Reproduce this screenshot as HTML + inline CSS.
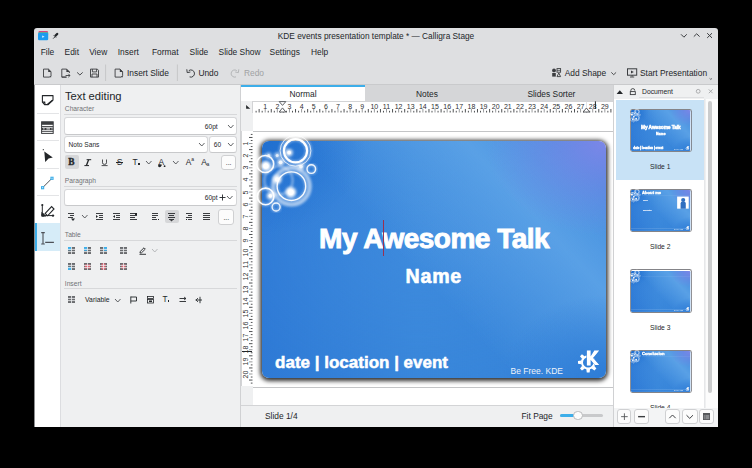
<!DOCTYPE html>
<html><head><meta charset="utf-8"><style>
html,body{margin:0;padding:0;}
body{width:752px;height:468px;background:#000;position:relative;overflow:hidden;font-family:"Liberation Sans", sans-serif;}
</style></head><body>
<div style="position:absolute;left:34px;top:28px;width:684px;height:399px;background:#dedfe1;border-radius:3px 3px 0 0;"></div>
<div style="position:absolute;left:76px;width:600px;text-align:center;top:31.97px;font-size:8.3px;line-height:8.3px;color:#232629;font-weight:normal;white-space:nowrap;font-family:'Liberation Sans', sans-serif;">KDE events presentation template * — Calligra Stage</div>
<div style="position:absolute;left:40.7px;top:48.29px;font-size:8.4px;line-height:8.4px;color:#232629;font-weight:normal;white-space:nowrap;font-family:'Liberation Sans', sans-serif;">File</div>
<div style="position:absolute;left:64.6px;top:48.29px;font-size:8.4px;line-height:8.4px;color:#232629;font-weight:normal;white-space:nowrap;font-family:'Liberation Sans', sans-serif;">Edit</div>
<div style="position:absolute;left:89.2px;top:48.29px;font-size:8.4px;line-height:8.4px;color:#232629;font-weight:normal;white-space:nowrap;font-family:'Liberation Sans', sans-serif;">View</div>
<div style="position:absolute;left:117.8px;top:48.29px;font-size:8.4px;line-height:8.4px;color:#232629;font-weight:normal;white-space:nowrap;font-family:'Liberation Sans', sans-serif;">Insert</div>
<div style="position:absolute;left:152px;top:48.29px;font-size:8.4px;line-height:8.4px;color:#232629;font-weight:normal;white-space:nowrap;font-family:'Liberation Sans', sans-serif;">Format</div>
<div style="position:absolute;left:189.6px;top:48.29px;font-size:8.4px;line-height:8.4px;color:#232629;font-weight:normal;white-space:nowrap;font-family:'Liberation Sans', sans-serif;">Slide</div>
<div style="position:absolute;left:218.6px;top:48.29px;font-size:8.4px;line-height:8.4px;color:#232629;font-weight:normal;white-space:nowrap;font-family:'Liberation Sans', sans-serif;">Slide Show</div>
<div style="position:absolute;left:269.6px;top:48.29px;font-size:8.4px;line-height:8.4px;color:#232629;font-weight:normal;white-space:nowrap;font-family:'Liberation Sans', sans-serif;">Settings</div>
<div style="position:absolute;left:311px;top:48.29px;font-size:8.4px;line-height:8.4px;color:#232629;font-weight:normal;white-space:nowrap;font-family:'Liberation Sans', sans-serif;">Help</div>
<div style="position:absolute;left:127px;top:69.49px;font-size:8.4px;line-height:8.4px;color:#232629;font-weight:normal;white-space:nowrap;font-family:'Liberation Sans', sans-serif;">Insert Slide</div>
<div style="position:absolute;left:198.4px;top:69.49px;font-size:8.4px;line-height:8.4px;color:#232629;font-weight:normal;white-space:nowrap;font-family:'Liberation Sans', sans-serif;">Undo</div>
<div style="position:absolute;left:244px;top:69.49px;font-size:8.4px;line-height:8.4px;color:#a0a2a4;font-weight:normal;white-space:nowrap;font-family:'Liberation Sans', sans-serif;">Redo</div>
<div style="position:absolute;left:564.7px;top:69.49px;font-size:8.4px;line-height:8.4px;color:#232629;font-weight:normal;white-space:nowrap;font-family:'Liberation Sans', sans-serif;">Add Shape</div>
<div style="position:absolute;left:640px;top:69.49px;font-size:8.4px;line-height:8.4px;color:#232629;font-weight:normal;white-space:nowrap;font-family:'Liberation Sans', sans-serif;">Start Presentation</div>
<svg style="position:absolute;left:34px;top:28px;" width="684" height="57" viewBox="0 0 684 57"><g transform="translate(-34,-28)"><rect x="38.5" y="31" width="9.5" height="2.5" rx="1" fill="#e0457b"/><rect x="38.3" y="32.2" width="10" height="2" rx="0.8" fill="#3cc7a0"/><rect x="38" y="33" width="10.2" height="7.3" rx="1.2" fill="#1d9bf0"/><path d="M42.2 35.6 L44.6 36.7 L42.2 37.8 Z" fill="#e6f3fd"/><path d="M53.2 38.6 L55.2 36.6" stroke="#232629" stroke-width="0.9"/><path d="M54.3 35.2 L56.6 32.9 Q57.6 32.5 58.2 33.3 Q58.6 34 58 34.7 L55.8 37 Z" fill="#232629"/><path d="M53.8 35.3 L56 37.5" stroke="#232629" stroke-width="1"/><path d="M681 34.3 L683.9 37.2 L686.8 34.3" fill="none" stroke="#3b3d40" stroke-width="1"/><path d="M693.8 36.6 L696.7 33.8 L699.6 36.6" fill="none" stroke="#3b3d40" stroke-width="1"/><path d="M707.2 33.2 L712 37.9 M712 33.2 L707.2 37.9" fill="none" stroke="#3b3d40" stroke-width="1"/><path d="M43.5 69.1 H48.4 L51 71.7 V75.6 L49.5 77.1 H43.5 Z" fill="none" stroke="#3b3d40" stroke-width="0.9"/><path d="M48.2 68.7 L51.4 71.9 L48.2 71.9 Z" fill="#3b3d40"/><path d="M49.4 77.3 L51.2 75.5 L51.2 77.3 Z" fill="#3b3d40"/><path d="M61.8 69.1 H66.6 L69.4 71.9 V73 M66.5 77.1 H61.8 Z" fill="none" stroke="#3b3d40" stroke-width="0.9"/><path d="M61.8 69.1 V77.1" stroke="#3b3d40" stroke-width="0.9"/><path d="M66.4 68.7 L69.8 72.1 L66.4 72.1 Z" fill="#3b3d40"/><path d="M65.6 75.5 H70 M68.3 73.8 L70 75.5 L68.3 77.2" fill="none" stroke="#3b3d40" stroke-width="0.9"/><path d="M77.1 72.4 L79.9 75 L82.7 72.4" fill="none" stroke="#3b3d40" stroke-width="0.9"/><path d="M90.5 69.1 H97.3 L98.5 70.3 V77.1 H90.5 Z" fill="none" stroke="#3b3d40" stroke-width="0.9"/><path d="M92.4 69.1 V71.9 H96.6 V69.1" fill="none" stroke="#3b3d40" stroke-width="0.9"/><path d="M92 77.1 V74 H97 V77.1" fill="none" stroke="#3b3d40" stroke-width="0.9"/><path d="M105.6 64.5 V81" stroke="#c6c7c9" stroke-width="1"/><path d="M115.1 69.1 H120 L122.6 71.7 V75.6 L121.1 77.1 H115.1 Z" fill="none" stroke="#3b3d40" stroke-width="0.9"/><path d="M119.8 68.7 L123 71.9 L119.8 71.9 Z" fill="#3b3d40"/><path d="M121 77.3 L122.8 75.5 L122.8 77.3 Z" fill="#3b3d40"/><path d="M177.4 64.5 V81" stroke="#c6c7c9" stroke-width="1"/><path d="M188.8 70.6 A3.6 3.6 0 1 1 189.6 76.9" fill="none" stroke="#3b3d40" stroke-width="1"/><path d="M186.8 69.3 L187.2 72.6 L190.4 72" fill="none" stroke="#3b3d40" stroke-width="1"/><path d="M236.8 70.6 A3.6 3.6 0 1 0 236 76.9" fill="none" stroke="#b4b6b8" stroke-width="1"/><path d="M238.8 69.3 L238.4 72.6 L235.2 72" fill="none" stroke="#b4b6b8" stroke-width="1"/><circle cx="554" cy="70.4" r="1.9" fill="#3b3d40"/><rect x="557" y="68.6" width="3.6" height="3.6" fill="none" stroke="#3b3d40" stroke-width="0.9"/><path d="M557 70.4 H560.6" stroke="#3b3d40" stroke-width="0.7"/><rect x="552.2" y="73" width="3.6" height="3.6" fill="#3b3d40"/><path d="M557 76.6 L558.8 73 L560.6 76.6 Z" fill="none" stroke="#3b3d40" stroke-width="0.9"/><path d="M611.3 72.4 L613.7 74.7 L616.1 72.4" fill="none" stroke="#3b3d40" stroke-width="0.9"/><rect x="627.5" y="68.8" width="9.2" height="6.4" fill="none" stroke="#3b3d40" stroke-width="1"/><path d="M631 70.6 L633.8 72 L631 73.4 Z" fill="#3b3d40"/><path d="M632.1 75.2 V76.6 M630 77 H634.2" stroke="#3b3d40" stroke-width="0.9"/><path d="M709.6 78.4 L710.8 79.4 L712 78.4" fill="none" stroke="#3b3d40" stroke-width="0.7"/></g></svg>
<div style="position:absolute;left:34px;top:84px;width:684px;height:1px;background:#c9cacc;"></div>
<div style="position:absolute;left:34px;top:85px;width:1px;height:342px;background:#8c8d8f;"></div>
<div style="position:absolute;left:35px;top:85px;width:25px;height:342px;background:#ffffff;"></div>
<div style="position:absolute;left:60px;top:85px;width:1px;height:342px;background:#dcdde0;"></div>
<div style="position:absolute;left:61px;top:85px;width:179px;height:342px;background:#eff0f1;"></div>
<div style="position:absolute;left:240px;top:85px;width:1px;height:342px;background:#d0d1d3;"></div>
<div style="position:absolute;left:613px;top:85px;width:1px;height:342px;background:#d0d1d3;"></div>
<div style="position:absolute;left:614px;top:85px;width:104px;height:342px;background:#eff0f1;"></div>
<div style="position:absolute;left:37px;top:112.5px;width:22px;height:1px;background:#e3e4e6;"></div>
<div style="position:absolute;left:37px;top:140px;width:22px;height:1px;background:#e3e4e6;"></div>
<div style="position:absolute;left:37px;top:167.6px;width:22px;height:1px;background:#e3e4e6;"></div>
<div style="position:absolute;left:37px;top:195px;width:22px;height:1px;background:#e3e4e6;"></div>
<div style="position:absolute;left:35px;top:222.6px;width:25px;height:28.4px;background:#d6ecf8;"></div>
<div style="position:absolute;left:35px;top:222.6px;width:2px;height:28.4px;background:#3daee9;"></div>
<svg style="position:absolute;left:34px;top:85px;" width="27" height="166" viewBox="0 0 27 166"><g transform="translate(-34,-85)"><path d="M42.4 95.6 H53 V100 L48.2 104.6 H44.6 L42.4 102.2 Z" fill="none" stroke="#232629" stroke-width="1.1" stroke-linejoin="round"/><path d="M42.2 101.6 L45.2 101.6 L45.6 104.8 Z" fill="#232629"/><path d="M47.5 104.2 L52.5 100.2" stroke="#232629" stroke-width="1.3"/><rect x="41.6" y="121.8" width="11.6" height="11.6" fill="none" stroke="#3b3d40" stroke-width="1"/><rect x="41.6" y="121.8" width="11.6" height="3" fill="#3b3d40"/><path d="M41.6 126.6 H53.2 M41.6 131.3 H53.2" stroke="#3b3d40" stroke-width="1"/><path d="M41.6 128.9 H53.2" stroke="#3b3d40" stroke-width="2.2"/><path d="M43.2 128.9 H44.6 M46.4 128.9 H50 M51.5 128.9 H52.5" stroke="#fcfcfc" stroke-width="1"/><path d="M44.3 151.6 L52.8 157.6 L48.6 158.4 L45.2 162 Z" fill="#232629"/><circle cx="43.3" cy="149.7" r="0.6" fill="#232629"/><path d="M42.6 187.7 L52 178.3" stroke="#3b3d40" stroke-width="0.9"/><rect x="41" y="186.1" width="3.2" height="3.2" fill="#3daee9"/><rect x="50.4" y="176.7" width="3.2" height="3.2" fill="#3daee9"/><rect x="42.1" y="187.2" width="1" height="1" fill="#e8f5fc"/><rect x="51.5" y="177.8" width="1" height="1" fill="#e8f5fc"/><path d="M42.3 205 V215.6 H53" fill="none" stroke="#232629" stroke-width="1"/><circle cx="42.3" cy="205" r="1.1" fill="#232629"/><circle cx="53" cy="215.6" r="1.2" fill="#232629"/><path d="M41.4 211.8 L46.4 216.6 L41.4 216.6 Z" fill="#232629"/><circle cx="43" cy="215" r="1.7" fill="#232629"/><path d="M45.2 213.4 L51.6 206.6 L54 209 L47.6 215.8 Z" fill="none" stroke="#232629" stroke-width="1.1"/><path d="M41.2 232.6 H44.8 M43 232.6 V244 M41.2 244 H44.8 M45.2 242.4 H53.9" stroke="#4d5057" stroke-width="1.1" fill="none"/></g></svg>
<div style="position:absolute;left:65.0px;top:90.72px;font-size:11.2px;line-height:11.2px;color:#232629;font-weight:normal;white-space:nowrap;font-family:'Liberation Sans', sans-serif;">Text editing</div>
<div style="position:absolute;left:64.8px;top:105.83px;font-size:6.7px;line-height:6.7px;color:#6f7276;font-weight:normal;white-space:nowrap;font-family:'Liberation Sans', sans-serif;">Character</div>
<div style="position:absolute;left:64px;top:114px;width:173px;height:1px;background:#d7d8da;"></div>
<div style="position:absolute;left:64.8px;top:177.83px;font-size:6.7px;line-height:6.7px;color:#6f7276;font-weight:normal;white-space:nowrap;font-family:'Liberation Sans', sans-serif;">Paragraph</div>
<div style="position:absolute;left:64px;top:186px;width:173px;height:1px;background:#d7d8da;"></div>
<div style="position:absolute;left:64.8px;top:231.93px;font-size:6.7px;line-height:6.7px;color:#6f7276;font-weight:normal;white-space:nowrap;font-family:'Liberation Sans', sans-serif;">Table</div>
<div style="position:absolute;left:64px;top:240px;width:173px;height:1px;background:#d7d8da;"></div>
<div style="position:absolute;left:64.8px;top:280.63px;font-size:6.7px;line-height:6.7px;color:#6f7276;font-weight:normal;white-space:nowrap;font-family:'Liberation Sans', sans-serif;">Insert</div>
<div style="position:absolute;left:64px;top:287.8px;width:173px;height:1px;background:#d7d8da;"></div>
<div style="position:absolute;left:63.9px;top:117.4px;width:173.2px;height:17.4px;background:#ffffff;border:1px solid #d6d7d9;border-bottom-color:#c8c9cb;border-radius:3px;box-sizing:border-box;"></div>
<div style="position:absolute;right:534.3px;text-align:right;top:124.01px;font-size:6.6px;line-height:6.6px;color:#232629;font-weight:normal;white-space:nowrap;font-family:'Liberation Sans', sans-serif;">60pt</div>
<svg style="position:absolute;left:227px;top:124px;" width="7.5" height="5" viewBox="0 0 7.5 5"><path d="M1 1 L3.75 4 L6.5 1" fill="none" stroke="#4d4f52" stroke-width="0.9"/></svg>
<div style="position:absolute;left:63.9px;top:136.4px;width:144.2px;height:16.2px;background:#ffffff;border:1px solid #d6d7d9;border-bottom-color:#c8c9cb;border-radius:3px;box-sizing:border-box;"></div>
<div style="position:absolute;left:68.6px;top:142.41px;font-size:6.6px;line-height:6.6px;color:#232629;font-weight:normal;white-space:nowrap;font-family:'Liberation Sans', sans-serif;">Noto Sans</div>
<svg style="position:absolute;left:198.2px;top:142.2px;" width="7.5" height="5" viewBox="0 0 7.5 5"><path d="M1 1 L3.75 4 L6.5 1" fill="none" stroke="#4d4f52" stroke-width="0.9"/></svg>
<div style="position:absolute;left:209.4px;top:136.4px;width:27.7px;height:16.2px;background:#ffffff;border:1px solid #d6d7d9;border-bottom-color:#c8c9cb;border-radius:3px;box-sizing:border-box;"></div>
<div style="position:absolute;left:213.8px;top:142.41px;font-size:6.6px;line-height:6.6px;color:#232629;font-weight:normal;white-space:nowrap;font-family:'Liberation Sans', sans-serif;">60</div>
<svg style="position:absolute;left:226.8px;top:142.2px;" width="7.5" height="5" viewBox="0 0 7.5 5"><path d="M1 1 L3.75 4 L6.5 1" fill="none" stroke="#4d4f52" stroke-width="0.9"/></svg>
<div style="position:absolute;left:65.3px;top:155.3px;width:13.3px;height:13.7px;background:#d6d7d9;border-radius:2px;"></div>
<div style="position:absolute;left:68.3px;top:157.54px;font-size:9.4px;line-height:9.4px;color:#232629;font-weight:bold;white-space:nowrap;font-family:'Liberation Serif', serif;-webkit-text-stroke:0.35px #232629;">B</div>
<svg style="position:absolute;left:84px;top:158.6px;" width="8" height="8" viewBox="0 0 8 8"><path d="M4.6 0.7 L2.4 6.6" stroke="#232629" stroke-width="1.3"/><path d="M2.6 0.7 H7.2 M0.4 6.6 H5" stroke="#232629" stroke-width="1"/></svg>
<svg style="position:absolute;left:100.5px;top:158.6px;" width="8" height="8" viewBox="0 0 8 8"><path d="M1.5 0.5 V3.8 Q1.5 5.4 3.5 5.4 Q5.5 5.4 5.5 3.8 V0.5" fill="none" stroke="#3b3d40" stroke-width="0.9"/><path d="M0.6 6.6 H6.6" stroke="#3b3d40" stroke-width="0.9"/></svg>
<div style="position:absolute;left:116.8px;top:158.32px;font-size:8.6px;line-height:8.6px;color:#232629;font-weight:normal;white-space:nowrap;font-family:'Liberation Sans', sans-serif;">S</div>
<div style="position:absolute;left:115.8px;top:161.5px;width:7.6px;height:0.8px;background:#232629;"></div>
<div style="position:absolute;left:132.4px;top:158.29px;font-size:8.4px;line-height:8.4px;color:#232629;font-weight:normal;white-space:nowrap;font-family:'Liberation Sans', sans-serif;">T</div>
<div style="position:absolute;left:137.6px;top:163.3px;width:2px;height:2px;background:#232629;"></div>
<svg style="position:absolute;left:145px;top:159.8px;" width="7.5" height="5" viewBox="0 0 7.5 5"><path d="M1 1 L3.75 4 L6.5 1" fill="none" stroke="#4d4f52" stroke-width="0.9"/></svg>
<div style="position:absolute;left:158.6px;top:158.29px;font-size:8.4px;line-height:8.4px;color:#232629;font-weight:normal;white-space:nowrap;font-family:'Liberation Sans', sans-serif;">A</div>
<svg style="position:absolute;left:157px;top:161px;" width="10" height="7" viewBox="0 0 10 7"><path d="M1.2 3.6 Q3.5 2.6 5 3.8 L3.8 5.8 Q2.4 6.6 1.2 5.6 Z" fill="#232629"/><circle cx="7.6" cy="5.2" r="0.9" fill="#232629"/></svg>
<svg style="position:absolute;left:171.8px;top:159.8px;" width="7.5" height="5" viewBox="0 0 7.5 5"><path d="M1 1 L3.75 4 L6.5 1" fill="none" stroke="#4d4f52" stroke-width="0.9"/></svg>
<div style="position:absolute;left:185.7px;top:158.29px;font-size:8.4px;line-height:8.4px;color:#232629;font-weight:normal;white-space:nowrap;font-family:'Liberation Sans', sans-serif;">A</div>
<div style="position:absolute;left:191.3px;top:156.77px;font-size:5px;line-height:5px;color:#232629;font-weight:normal;white-space:nowrap;font-family:'Liberation Sans', sans-serif;">a</div>
<div style="position:absolute;left:201.2px;top:158.29px;font-size:8.4px;line-height:8.4px;color:#232629;font-weight:normal;white-space:nowrap;font-family:'Liberation Sans', sans-serif;">A</div>
<div style="position:absolute;left:206.6px;top:162.37px;font-size:5px;line-height:5px;color:#232629;font-weight:normal;white-space:nowrap;font-family:'Liberation Sans', sans-serif;">a</div>
<div style="position:absolute;left:220.9px;top:155px;width:15.4px;height:15.4px;background:#fcfcfc;border:1px solid #cfd0d2;border-radius:3px;box-sizing:border-box;"></div>
<div style="position:absolute;left:-71.4px;width:600px;text-align:center;top:159.37px;font-size:7px;line-height:7px;color:#232629;font-weight:normal;white-space:nowrap;font-family:'Liberation Sans', sans-serif;">...</div>
<div style="position:absolute;left:63.9px;top:189.2px;width:173.2px;height:16.6px;background:#ffffff;border:1px solid #d6d7d9;border-bottom-color:#c8c9cb;border-radius:3px;box-sizing:border-box;"></div>
<div style="position:absolute;right:534.4px;text-align:right;top:195.21px;font-size:6.6px;line-height:6.6px;color:#232629;font-weight:normal;white-space:nowrap;font-family:'Liberation Sans', sans-serif;">60pt</div>
<svg style="position:absolute;left:218.5px;top:193.8px;" width="7" height="7" viewBox="0 0 7 7"><path d="M3.5 0.5 V6.5 M0.5 3.5 H6.5" stroke="#232629" stroke-width="0.9"/></svg>
<svg style="position:absolute;left:226.4px;top:194.9px;" width="7.5" height="5" viewBox="0 0 7.5 5"><path d="M1 1 L3.75 4 L6.5 1" fill="none" stroke="#4d4f52" stroke-width="0.9"/></svg>
<svg style="position:absolute;left:68px;top:213px;" width="9" height="9" viewBox="0 0 9 9"><rect x="0" y="0" width="6" height="1" fill="#3b3d40"/><rect x="2" y="2" width="4" height="1" fill="#3b3d40"/><rect x="0" y="4" width="5" height="1" fill="#3b3d40"/><path d="M3 5.5 L7 5.5 L5 8 Z" fill="#232629"/><rect x="0" y="4" width="2" height="1" fill="#3b3d40"/></svg>
<svg style="position:absolute;left:81px;top:214.2px;" width="7.5" height="5" viewBox="0 0 7.5 5"><path d="M1 1 L3.75 4 L6.5 1" fill="none" stroke="#4d4f52" stroke-width="0.9"/></svg>
<svg style="position:absolute;left:96px;top:213px;" width="9" height="9" viewBox="0 0 9 9"><rect x="0" y="0" width="7" height="1" fill="#3b3d40"/><rect x="3" y="2" width="4" height="1" fill="#3b3d40"/><rect x="3" y="4" width="4" height="1" fill="#3b3d40"/><rect x="0" y="6" width="7" height="1" fill="#3b3d40"/><path d="M0 2 L2 3.5 L0 5 Z" fill="#232629"/></svg>
<svg style="position:absolute;left:113px;top:213px;" width="9" height="9" viewBox="0 0 9 9"><rect x="0" y="0" width="7" height="1" fill="#3b3d40"/><rect x="3" y="2" width="4" height="1" fill="#3b3d40"/><rect x="3" y="4" width="4" height="1" fill="#3b3d40"/><rect x="0" y="6" width="7" height="1" fill="#3b3d40"/><path d="M2 2 L0 3.5 L2 5 Z" fill="#232629"/></svg>
<svg style="position:absolute;left:130px;top:213px;" width="9" height="9" viewBox="0 0 9 9"><rect x="0" y="0" width="5" height="1" fill="#3b3d40"/><rect x="0" y="2" width="7" height="1" fill="#3b3d40"/><rect x="0" y="4" width="5" height="1" fill="#3b3d40"/><rect x="0" y="6" width="7" height="1" fill="#3b3d40"/><rect x="5" y="0" width="2" height="2" fill="#232629"/></svg>
<div style="position:absolute;left:165.3px;top:210.1px;width:13.4px;height:13.1px;background:#d6d7d9;border-radius:2px;"></div>
<svg style="position:absolute;left:152px;top:213px;" width="9" height="9" viewBox="0 0 9 9"><rect x="0" y="0" width="6" height="1" fill="#3b3d40"/><rect x="0" y="2" width="6" height="1" fill="#3b3d40"/><rect x="0" y="4" width="4" height="1" fill="#3b3d40"/><rect x="0" y="6" width="5" height="1" fill="#3b3d40"/><rect x="6" y="6" width="1" height="1" fill="#232629"/></svg>
<svg style="position:absolute;left:168px;top:213px;" width="9" height="9" viewBox="0 0 9 9"><rect x="0" y="0" width="7" height="1" fill="#3b3d40"/><rect x="1" y="2" width="5" height="1" fill="#3b3d40"/><rect x="0" y="4" width="7" height="1" fill="#3b3d40"/><rect x="1" y="6" width="5" height="1" fill="#3b3d40"/><path d="M2 7 L5 7 L3.5 8.5 Z" fill="#3b3d40"/></svg>
<svg style="position:absolute;left:186px;top:213px;" width="9" height="9" viewBox="0 0 9 9"><rect x="0" y="0" width="6" height="1" fill="#3b3d40"/><rect x="2" y="2" width="4" height="1" fill="#3b3d40"/><rect x="0" y="4" width="6" height="1" fill="#3b3d40"/><rect x="2" y="6" width="4" height="1" fill="#3b3d40"/><rect x="0" y="6" width="1" height="1" fill="#232629"/></svg>
<svg style="position:absolute;left:203px;top:213px;" width="9" height="9" viewBox="0 0 9 9"><rect x="0" y="0" width="7" height="1" fill="#3b3d40"/><rect x="0" y="2" width="7" height="1" fill="#3b3d40"/><rect x="0" y="4" width="7" height="1" fill="#3b3d40"/><rect x="0" y="6" width="7" height="1" fill="#3b3d40"/></svg>
<div style="position:absolute;left:218.4px;top:208.8px;width:15.8px;height:16.7px;background:#fcfcfc;border:1px solid #cfd0d2;border-radius:3px;box-sizing:border-box;"></div>
<div style="position:absolute;left:-73.69999999999999px;width:600px;text-align:center;top:213.67px;font-size:7px;line-height:7px;color:#232629;font-weight:normal;white-space:nowrap;font-family:'Liberation Sans', sans-serif;">...</div>
<svg style="position:absolute;left:68.4px;top:247.2px;" width="7" height="7" viewBox="0 0 7 7"><rect x="0" y="0" width="7" height="7" fill="#6a6c6f"/><rect x="0" y="0" width="3.5" height="3.2" fill="#3daee9"/><path d="M0 2.4 H7 M0 4.6 H7 M3.5 0 V7" stroke="#eef0f2" stroke-width="0.8"/></svg>
<svg style="position:absolute;left:84.4px;top:247.2px;" width="7" height="7" viewBox="0 0 7 7"><rect x="0" y="0" width="7" height="7" fill="#6a6c6f"/><rect x="0" y="0" width="3.5" height="3.8" fill="#3daee9"/><path d="M0 2.4 H7 M0 4.6 H7 M3.5 0 V7" stroke="#eef0f2" stroke-width="0.8"/></svg>
<svg style="position:absolute;left:100.2px;top:247.2px;" width="7" height="7" viewBox="0 0 7 7"><rect x="0" y="0" width="7" height="7" fill="#6a6c6f"/><rect x="3.5" y="0" width="3.5" height="3.8" fill="#3daee9"/><path d="M0 2.4 H7 M0 4.6 H7 M3.5 0 V7" stroke="#eef0f2" stroke-width="0.8"/></svg>
<svg style="position:absolute;left:119.8px;top:247.2px;" width="7" height="7" viewBox="0 0 7 7"><rect x="0" y="0" width="7" height="7" fill="#6a6c6f"/><path d="M0 2.4 H7 M0 4.6 H7 M3.5 0 V7" stroke="#eef0f2" stroke-width="0.8"/></svg>
<svg style="position:absolute;left:138.5px;top:247px;" width="8" height="8" viewBox="0 0 8 8"><path d="M1 6 L1.2 4.5 L5 0.8 L6.3 2.1 L2.5 5.8 Z" fill="none" stroke="#232629" stroke-width="0.9"/><path d="M0.5 7.3 H7" stroke="#232629" stroke-width="0.9"/></svg>
<svg style="position:absolute;left:151.1px;top:248.4px;" width="7.5" height="5" viewBox="0 0 7.5 5"><path d="M1 1 L3.75 4 L6.5 1" fill="none" stroke="#b0b2b4" stroke-width="0.9"/></svg>
<svg style="position:absolute;left:68.4px;top:263.2px;" width="7" height="7" viewBox="0 0 7 7"><rect x="0" y="0" width="7" height="7" fill="#6a6c6f"/><rect x="0" y="3.8" width="3.5" height="3.2" fill="#3daee9"/><path d="M0 2.4 H7 M0 4.6 H7 M3.5 0 V7" stroke="#eef0f2" stroke-width="0.8"/></svg>
<svg style="position:absolute;left:84.4px;top:263.2px;" width="7" height="7" viewBox="0 0 7 7"><rect x="0" y="0" width="7" height="7" fill="#6a6c6f"/><rect x="0.8" y="1.5" width="5.4" height="4" fill="#e26573"/><path d="M0 2.4 H7 M0 4.6 H7 M3.5 0 V7" stroke="#eef0f2" stroke-width="0.8"/></svg>
<svg style="position:absolute;left:100.2px;top:263.2px;" width="7" height="7" viewBox="0 0 7 7"><rect x="0" y="0" width="7" height="7" fill="#6a6c6f"/><rect x="1.5" y="0.5" width="4" height="6" fill="#e26573"/><path d="M0 2.4 H7 M0 4.6 H7 M3.5 0 V7" stroke="#eef0f2" stroke-width="0.8"/></svg>
<svg style="position:absolute;left:119.8px;top:263.2px;" width="7" height="7" viewBox="0 0 7 7"><rect x="0" y="0" width="7" height="7" fill="#6a6c6f"/><rect x="1.5" y="1.5" width="4" height="4" fill="#e26573"/><path d="M0 2.4 H7 M0 4.6 H7 M3.5 0 V7" stroke="#eef0f2" stroke-width="0.8"/></svg>
<svg style="position:absolute;left:68.4px;top:296px;" width="7" height="7" viewBox="0 0 7 7"><rect x="0" y="0" width="7" height="7" fill="#6a6c6f"/><path d="M0 2.4 H7 M0 4.6 H7 M3.5 0 V7" stroke="#eef0f2" stroke-width="0.8"/></svg>
<div style="position:absolute;left:85.1px;top:296.64px;font-size:6.8px;line-height:6.8px;color:#232629;font-weight:normal;white-space:nowrap;font-family:'Liberation Sans', sans-serif;">Variable</div>
<svg style="position:absolute;left:114px;top:297.6px;" width="7.5" height="5" viewBox="0 0 7.5 5"><path d="M1 1 L3.75 4 L6.5 1" fill="none" stroke="#4d4f52" stroke-width="0.9"/></svg>
<svg style="position:absolute;left:129.9px;top:295.5px;" width="8" height="8" viewBox="0 0 8 8"><path d="M0.8 0.5 V7.5 M0.8 1 H6.5 V5 H0.8" fill="none" stroke="#232629" stroke-width="0.9"/></svg>
<svg style="position:absolute;left:146.6px;top:295.5px;" width="8" height="8" viewBox="0 0 8 8"><rect x="0.5" y="0.5" width="6" height="2" fill="none" stroke="#232629" stroke-width="0.8"/><rect x="0.5" y="3.5" width="6" height="3.5" fill="none" stroke="#232629" stroke-width="0.8"/><rect x="2" y="4.5" width="3" height="1.5" fill="#232629"/></svg>
<div style="position:absolute;left:162.4px;top:295.66px;font-size:8.2px;line-height:8.2px;color:#232629;font-weight:normal;white-space:nowrap;font-family:'Liberation Sans', sans-serif;">T</div>
<div style="position:absolute;left:167.7px;top:300.3px;width:1.8px;height:1.8px;background:#232629;"></div>
<svg style="position:absolute;left:178.5px;top:295.5px;" width="8" height="8" viewBox="0 0 8 8"><path d="M0.5 2.5 H7 M0.5 5.5 H7" stroke="#232629" stroke-width="0.9"/><path d="M5 1 L7 2.5 L5 4" fill="none" stroke="#232629" stroke-width="0.8"/></svg>
<svg style="position:absolute;left:194.5px;top:295.5px;" width="8" height="8" viewBox="0 0 8 8"><path d="M0.5 4 H7 M5 0.8 V7.2" stroke="#232629" stroke-width="0.9"/><path d="M3 2 L1 4 L3 6" fill="none" stroke="#232629" stroke-width="0.8"/></svg>
<div style="position:absolute;left:241px;top:85px;width:372px;height:16px;background:#d5d6d8;"></div>
<div style="position:absolute;left:241px;top:85px;width:124px;height:16px;background:#ffffff;"></div>
<div style="position:absolute;left:241px;top:85px;width:124px;height:2px;background:#3daee9;"></div>
<div style="position:absolute;left:3px;width:600px;text-align:center;top:89.59px;font-size:8.4px;line-height:8.4px;color:#232629;font-weight:normal;white-space:nowrap;font-family:'Liberation Sans', sans-serif;">Normal</div>
<div style="position:absolute;left:127px;width:600px;text-align:center;top:89.59px;font-size:8.4px;line-height:8.4px;color:#232629;font-weight:normal;white-space:nowrap;font-family:'Liberation Sans', sans-serif;">Notes</div>
<div style="position:absolute;left:251.39999999999998px;width:600px;text-align:center;top:89.59px;font-size:8.4px;line-height:8.4px;color:#232629;font-weight:normal;white-space:nowrap;font-family:'Liberation Sans', sans-serif;">Slides Sorter</div>
<div style="position:absolute;left:241px;top:101px;width:372px;height:12px;background:#eff0f1;"></div>
<div style="position:absolute;left:252px;top:101px;width:361px;height:12px;background:#ffffff;border-top:1px solid #d3d4d6;border-left:1px solid #d3d4d6;box-sizing:border-box;"></div>
<svg style="position:absolute;left:245px;top:104px;" width="7" height="6" viewBox="0 0 7 6"><path d="M1.1 0.9 L5.3 4.8 L1.1 4.8 Z" fill="#232629"/></svg>
<svg style="position:absolute;left:253px;top:101px;" width="360" height="12" viewBox="0 0 360 12"><rect x="2.60" y="9.8" width="1" height="1.7" fill="#505254"/><rect x="5.63" y="8" width="1" height="3.5" fill="#505254"/><rect x="8.67" y="9.8" width="1" height="1.7" fill="#505254"/><rect x="11.70" y="8" width="1" height="3.5" fill="#9a9b9d"/><rect x="14.73" y="9.8" width="1" height="1.7" fill="#505254"/><rect x="17.76" y="8" width="1" height="3.5" fill="#505254"/><rect x="20.80" y="9.8" width="1" height="1.7" fill="#505254"/><rect x="23.83" y="8" width="1" height="3.5" fill="#9a9b9d"/><rect x="26.86" y="9.8" width="1" height="1.7" fill="#505254"/><rect x="29.89" y="8" width="1" height="3.5" fill="#505254"/><rect x="32.93" y="9.8" width="1" height="1.7" fill="#505254"/><rect x="35.96" y="8" width="1" height="3.5" fill="#9a9b9d"/><rect x="38.99" y="9.8" width="1" height="1.7" fill="#505254"/><rect x="42.02" y="8" width="1" height="3.5" fill="#505254"/><rect x="45.06" y="9.8" width="1" height="1.7" fill="#505254"/><rect x="48.09" y="8" width="1" height="3.5" fill="#9a9b9d"/><rect x="51.12" y="9.8" width="1" height="1.7" fill="#505254"/><rect x="54.15" y="8" width="1" height="3.5" fill="#505254"/><rect x="57.19" y="9.8" width="1" height="1.7" fill="#505254"/><rect x="60.22" y="8" width="1" height="3.5" fill="#9a9b9d"/><rect x="63.25" y="9.8" width="1" height="1.7" fill="#505254"/><rect x="66.28" y="8" width="1" height="3.5" fill="#505254"/><rect x="69.32" y="9.8" width="1" height="1.7" fill="#505254"/><rect x="72.35" y="8" width="1" height="3.5" fill="#9a9b9d"/><rect x="75.38" y="9.8" width="1" height="1.7" fill="#505254"/><rect x="78.41" y="8" width="1" height="3.5" fill="#505254"/><rect x="81.45" y="9.8" width="1" height="1.7" fill="#505254"/><rect x="84.48" y="8" width="1" height="3.5" fill="#9a9b9d"/><rect x="87.51" y="9.8" width="1" height="1.7" fill="#505254"/><rect x="90.55" y="8" width="1" height="3.5" fill="#505254"/><rect x="93.58" y="9.8" width="1" height="1.7" fill="#505254"/><rect x="96.61" y="8" width="1" height="3.5" fill="#9a9b9d"/><rect x="99.64" y="9.8" width="1" height="1.7" fill="#505254"/><rect x="102.68" y="8" width="1" height="3.5" fill="#505254"/><rect x="105.71" y="9.8" width="1" height="1.7" fill="#505254"/><rect x="108.74" y="8" width="1" height="3.5" fill="#9a9b9d"/><rect x="111.77" y="9.8" width="1" height="1.7" fill="#505254"/><rect x="114.81" y="8" width="1" height="3.5" fill="#505254"/><rect x="117.84" y="9.8" width="1" height="1.7" fill="#505254"/><rect x="120.87" y="8" width="1" height="3.5" fill="#9a9b9d"/><rect x="123.90" y="9.8" width="1" height="1.7" fill="#505254"/><rect x="126.94" y="8" width="1" height="3.5" fill="#505254"/><rect x="129.97" y="9.8" width="1" height="1.7" fill="#505254"/><rect x="133.00" y="8" width="1" height="3.5" fill="#9a9b9d"/><rect x="136.03" y="9.8" width="1" height="1.7" fill="#505254"/><rect x="139.06" y="8" width="1" height="3.5" fill="#505254"/><rect x="142.10" y="9.8" width="1" height="1.7" fill="#505254"/><rect x="145.13" y="8" width="1" height="3.5" fill="#9a9b9d"/><rect x="148.16" y="9.8" width="1" height="1.7" fill="#505254"/><rect x="151.19" y="8" width="1" height="3.5" fill="#505254"/><rect x="154.23" y="9.8" width="1" height="1.7" fill="#505254"/><rect x="157.26" y="8" width="1" height="3.5" fill="#9a9b9d"/><rect x="160.29" y="9.8" width="1" height="1.7" fill="#505254"/><rect x="163.33" y="8" width="1" height="3.5" fill="#505254"/><rect x="166.36" y="9.8" width="1" height="1.7" fill="#505254"/><rect x="169.39" y="8" width="1" height="3.5" fill="#9a9b9d"/><rect x="172.42" y="9.8" width="1" height="1.7" fill="#505254"/><rect x="175.46" y="8" width="1" height="3.5" fill="#505254"/><rect x="178.49" y="9.8" width="1" height="1.7" fill="#505254"/><rect x="181.52" y="8" width="1" height="3.5" fill="#9a9b9d"/><rect x="184.55" y="9.8" width="1" height="1.7" fill="#505254"/><rect x="187.59" y="8" width="1" height="3.5" fill="#505254"/><rect x="190.62" y="9.8" width="1" height="1.7" fill="#505254"/><rect x="193.65" y="8" width="1" height="3.5" fill="#9a9b9d"/><rect x="196.68" y="9.8" width="1" height="1.7" fill="#505254"/><rect x="199.72" y="8" width="1" height="3.5" fill="#505254"/><rect x="202.75" y="9.8" width="1" height="1.7" fill="#505254"/><rect x="205.78" y="8" width="1" height="3.5" fill="#9a9b9d"/><rect x="208.81" y="9.8" width="1" height="1.7" fill="#505254"/><rect x="211.85" y="8" width="1" height="3.5" fill="#505254"/><rect x="214.88" y="9.8" width="1" height="1.7" fill="#505254"/><rect x="217.91" y="8" width="1" height="3.5" fill="#9a9b9d"/><rect x="220.94" y="9.8" width="1" height="1.7" fill="#505254"/><rect x="223.98" y="8" width="1" height="3.5" fill="#505254"/><rect x="227.01" y="9.8" width="1" height="1.7" fill="#505254"/><rect x="230.04" y="8" width="1" height="3.5" fill="#9a9b9d"/><rect x="233.07" y="9.8" width="1" height="1.7" fill="#505254"/><rect x="236.11" y="8" width="1" height="3.5" fill="#505254"/><rect x="239.14" y="9.8" width="1" height="1.7" fill="#505254"/><rect x="242.17" y="8" width="1" height="3.5" fill="#9a9b9d"/><rect x="245.20" y="9.8" width="1" height="1.7" fill="#505254"/><rect x="248.24" y="8" width="1" height="3.5" fill="#505254"/><rect x="251.27" y="9.8" width="1" height="1.7" fill="#505254"/><rect x="254.30" y="8" width="1" height="3.5" fill="#9a9b9d"/><rect x="257.33" y="9.8" width="1" height="1.7" fill="#505254"/><rect x="260.37" y="8" width="1" height="3.5" fill="#505254"/><rect x="263.40" y="9.8" width="1" height="1.7" fill="#505254"/><rect x="266.43" y="8" width="1" height="3.5" fill="#9a9b9d"/><rect x="269.46" y="9.8" width="1" height="1.7" fill="#505254"/><rect x="272.50" y="8" width="1" height="3.5" fill="#505254"/><rect x="275.53" y="9.8" width="1" height="1.7" fill="#505254"/><rect x="278.56" y="8" width="1" height="3.5" fill="#9a9b9d"/><rect x="281.59" y="9.8" width="1" height="1.7" fill="#505254"/><rect x="284.62" y="8" width="1" height="3.5" fill="#505254"/><rect x="287.66" y="9.8" width="1" height="1.7" fill="#505254"/><rect x="290.69" y="8" width="1" height="3.5" fill="#9a9b9d"/><rect x="293.72" y="9.8" width="1" height="1.7" fill="#505254"/><rect x="296.75" y="8" width="1" height="3.5" fill="#505254"/><rect x="299.79" y="9.8" width="1" height="1.7" fill="#505254"/><rect x="302.82" y="8" width="1" height="3.5" fill="#9a9b9d"/><rect x="305.85" y="9.8" width="1" height="1.7" fill="#505254"/><rect x="308.88" y="8" width="1" height="3.5" fill="#505254"/><rect x="311.92" y="9.8" width="1" height="1.7" fill="#505254"/><rect x="314.95" y="8" width="1" height="3.5" fill="#9a9b9d"/><rect x="317.98" y="9.8" width="1" height="1.7" fill="#505254"/><rect x="321.01" y="8" width="1" height="3.5" fill="#505254"/><rect x="324.05" y="9.8" width="1" height="1.7" fill="#505254"/><rect x="327.08" y="8" width="1" height="3.5" fill="#9a9b9d"/><rect x="330.11" y="9.8" width="1" height="1.7" fill="#505254"/><rect x="333.14" y="8" width="1" height="3.5" fill="#505254"/><rect x="336.18" y="9.8" width="1" height="1.7" fill="#505254"/><rect x="339.21" y="8" width="1" height="3.5" fill="#9a9b9d"/><rect x="342.24" y="9.8" width="1" height="1.7" fill="#505254"/><rect x="345.28" y="8" width="1" height="3.5" fill="#505254"/><rect x="348.31" y="9.8" width="1" height="1.7" fill="#505254"/><rect x="351.34" y="8" width="1" height="3.5" fill="#9a9b9d"/><rect x="354.37" y="9.8" width="1" height="1.7" fill="#505254"/><rect x="357.40" y="8" width="1" height="3.5" fill="#505254"/></svg>
<div style="position:absolute;left:-34.80000000000001px;width:600px;text-align:center;top:102.97px;font-size:7px;line-height:7px;color:#2e3033;font-weight:normal;white-space:nowrap;font-family:'Liberation Sans', sans-serif;">1</div>
<div style="position:absolute;left:-22.670000000000016px;width:600px;text-align:center;top:102.97px;font-size:7px;line-height:7px;color:#2e3033;font-weight:normal;white-space:nowrap;font-family:'Liberation Sans', sans-serif;">2</div>
<div style="position:absolute;left:-10.54000000000002px;width:600px;text-align:center;top:102.97px;font-size:7px;line-height:7px;color:#2e3033;font-weight:normal;white-space:nowrap;font-family:'Liberation Sans', sans-serif;">3</div>
<div style="position:absolute;left:1.589999999999975px;width:600px;text-align:center;top:102.97px;font-size:7px;line-height:7px;color:#2e3033;font-weight:normal;white-space:nowrap;font-family:'Liberation Sans', sans-serif;">4</div>
<div style="position:absolute;left:13.720000000000027px;width:600px;text-align:center;top:102.97px;font-size:7px;line-height:7px;color:#2e3033;font-weight:normal;white-space:nowrap;font-family:'Liberation Sans', sans-serif;">5</div>
<div style="position:absolute;left:25.850000000000023px;width:600px;text-align:center;top:102.97px;font-size:7px;line-height:7px;color:#2e3033;font-weight:normal;white-space:nowrap;font-family:'Liberation Sans', sans-serif;">6</div>
<div style="position:absolute;left:37.98000000000002px;width:600px;text-align:center;top:102.97px;font-size:7px;line-height:7px;color:#2e3033;font-weight:normal;white-space:nowrap;font-family:'Liberation Sans', sans-serif;">7</div>
<div style="position:absolute;left:50.110000000000014px;width:600px;text-align:center;top:102.97px;font-size:7px;line-height:7px;color:#2e3033;font-weight:normal;white-space:nowrap;font-family:'Liberation Sans', sans-serif;">8</div>
<div style="position:absolute;left:62.24000000000001px;width:600px;text-align:center;top:102.97px;font-size:7px;line-height:7px;color:#2e3033;font-weight:normal;white-space:nowrap;font-family:'Liberation Sans', sans-serif;">9</div>
<div style="position:absolute;left:74.37px;width:600px;text-align:center;top:102.97px;font-size:7px;line-height:7px;color:#2e3033;font-weight:normal;white-space:nowrap;font-family:'Liberation Sans', sans-serif;">10</div>
<div style="position:absolute;left:86.5px;width:600px;text-align:center;top:102.97px;font-size:7px;line-height:7px;color:#2e3033;font-weight:normal;white-space:nowrap;font-family:'Liberation Sans', sans-serif;">11</div>
<div style="position:absolute;left:98.63px;width:600px;text-align:center;top:102.97px;font-size:7px;line-height:7px;color:#2e3033;font-weight:normal;white-space:nowrap;font-family:'Liberation Sans', sans-serif;">12</div>
<div style="position:absolute;left:110.75999999999999px;width:600px;text-align:center;top:102.97px;font-size:7px;line-height:7px;color:#2e3033;font-weight:normal;white-space:nowrap;font-family:'Liberation Sans', sans-serif;">13</div>
<div style="position:absolute;left:122.88999999999999px;width:600px;text-align:center;top:102.97px;font-size:7px;line-height:7px;color:#2e3033;font-weight:normal;white-space:nowrap;font-family:'Liberation Sans', sans-serif;">14</div>
<div style="position:absolute;left:135.01999999999998px;width:600px;text-align:center;top:102.97px;font-size:7px;line-height:7px;color:#2e3033;font-weight:normal;white-space:nowrap;font-family:'Liberation Sans', sans-serif;">15</div>
<div style="position:absolute;left:147.14999999999998px;width:600px;text-align:center;top:102.97px;font-size:7px;line-height:7px;color:#2e3033;font-weight:normal;white-space:nowrap;font-family:'Liberation Sans', sans-serif;">16</div>
<div style="position:absolute;left:159.27999999999997px;width:600px;text-align:center;top:102.97px;font-size:7px;line-height:7px;color:#2e3033;font-weight:normal;white-space:nowrap;font-family:'Liberation Sans', sans-serif;">17</div>
<div style="position:absolute;left:171.40999999999997px;width:600px;text-align:center;top:102.97px;font-size:7px;line-height:7px;color:#2e3033;font-weight:normal;white-space:nowrap;font-family:'Liberation Sans', sans-serif;">18</div>
<div style="position:absolute;left:183.54000000000002px;width:600px;text-align:center;top:102.97px;font-size:7px;line-height:7px;color:#2e3033;font-weight:normal;white-space:nowrap;font-family:'Liberation Sans', sans-serif;">19</div>
<div style="position:absolute;left:195.67000000000002px;width:600px;text-align:center;top:102.97px;font-size:7px;line-height:7px;color:#2e3033;font-weight:normal;white-space:nowrap;font-family:'Liberation Sans', sans-serif;">20</div>
<div style="position:absolute;left:207.8px;width:600px;text-align:center;top:102.97px;font-size:7px;line-height:7px;color:#2e3033;font-weight:normal;white-space:nowrap;font-family:'Liberation Sans', sans-serif;">21</div>
<div style="position:absolute;left:219.93000000000006px;width:600px;text-align:center;top:102.97px;font-size:7px;line-height:7px;color:#2e3033;font-weight:normal;white-space:nowrap;font-family:'Liberation Sans', sans-serif;">22</div>
<div style="position:absolute;left:232.05999999999995px;width:600px;text-align:center;top:102.97px;font-size:7px;line-height:7px;color:#2e3033;font-weight:normal;white-space:nowrap;font-family:'Liberation Sans', sans-serif;">23</div>
<div style="position:absolute;left:244.19000000000005px;width:600px;text-align:center;top:102.97px;font-size:7px;line-height:7px;color:#2e3033;font-weight:normal;white-space:nowrap;font-family:'Liberation Sans', sans-serif;">24</div>
<div style="position:absolute;left:256.31999999999994px;width:600px;text-align:center;top:102.97px;font-size:7px;line-height:7px;color:#2e3033;font-weight:normal;white-space:nowrap;font-family:'Liberation Sans', sans-serif;">25</div>
<div style="position:absolute;left:268.45000000000005px;width:600px;text-align:center;top:102.97px;font-size:7px;line-height:7px;color:#2e3033;font-weight:normal;white-space:nowrap;font-family:'Liberation Sans', sans-serif;">26</div>
<div style="position:absolute;left:280.58000000000004px;width:600px;text-align:center;top:102.97px;font-size:7px;line-height:7px;color:#2e3033;font-weight:normal;white-space:nowrap;font-family:'Liberation Sans', sans-serif;">27</div>
<div style="position:absolute;left:292.71000000000004px;width:600px;text-align:center;top:102.97px;font-size:7px;line-height:7px;color:#2e3033;font-weight:normal;white-space:nowrap;font-family:'Liberation Sans', sans-serif;">28</div>
<div style="position:absolute;left:304.84000000000003px;width:600px;text-align:center;top:102.97px;font-size:7px;line-height:7px;color:#2e3033;font-weight:normal;white-space:nowrap;font-family:'Liberation Sans', sans-serif;">29</div>
<svg style="position:absolute;left:241px;top:99px;" width="372" height="16" viewBox="0 0 372 16"><g transform="translate(-241,-99)"><path d="M279.2 101.6 H285.8 L282.5 105.4 Z" fill="#ffffff" stroke="#4d4f52" stroke-width="0.9"/><path d="M279.2 112 H285.8 L282.5 107.9 Z" fill="#ffffff" stroke="#4d4f52" stroke-width="0.9"/><path d="M586.5 101.5 V112.5" stroke="#dcdde0" stroke-width="0.8"/><path d="M583.2 112 H589.6 L586.4 108 Z" fill="#ffffff" stroke="#4d4f52" stroke-width="0.9"/><path d="M595.4 101.3 V109" stroke="#232629" stroke-width="1"/></g></svg>
<div style="position:absolute;left:241px;top:113px;width:372px;height:292px;background:#ffffff;"></div>
<div style="position:absolute;left:241px;top:113px;width:12px;height:18px;background:#eff0f1;"></div>
<div style="position:absolute;left:241px;top:131px;width:12px;height:274px;background:#eff0f1;"></div>
<div style="position:absolute;left:241px;top:131px;width:12px;height:255px;background:#ffffff;border-left:1px solid #d3d4d6;box-sizing:border-box;"></div>
<div style="position:absolute;left:229.7px;top:140.03px;width:30px;height:7px;line-height:7px;text-align:center;font-size:7px;color:#2e3033;transform:rotate(-90deg);">1</div>
<div style="position:absolute;left:229.7px;top:152.16px;width:30px;height:7px;line-height:7px;text-align:center;font-size:7px;color:#2e3033;transform:rotate(-90deg);">2</div>
<div style="position:absolute;left:229.7px;top:164.29px;width:30px;height:7px;line-height:7px;text-align:center;font-size:7px;color:#2e3033;transform:rotate(-90deg);">3</div>
<div style="position:absolute;left:229.7px;top:176.42px;width:30px;height:7px;line-height:7px;text-align:center;font-size:7px;color:#2e3033;transform:rotate(-90deg);">4</div>
<div style="position:absolute;left:229.7px;top:188.55px;width:30px;height:7px;line-height:7px;text-align:center;font-size:7px;color:#2e3033;transform:rotate(-90deg);">5</div>
<div style="position:absolute;left:229.7px;top:200.68px;width:30px;height:7px;line-height:7px;text-align:center;font-size:7px;color:#2e3033;transform:rotate(-90deg);">6</div>
<div style="position:absolute;left:229.7px;top:212.81px;width:30px;height:7px;line-height:7px;text-align:center;font-size:7px;color:#2e3033;transform:rotate(-90deg);">7</div>
<div style="position:absolute;left:229.7px;top:224.94px;width:30px;height:7px;line-height:7px;text-align:center;font-size:7px;color:#2e3033;transform:rotate(-90deg);">8</div>
<div style="position:absolute;left:229.7px;top:237.07px;width:30px;height:7px;line-height:7px;text-align:center;font-size:7px;color:#2e3033;transform:rotate(-90deg);">9</div>
<div style="position:absolute;left:229.7px;top:249.20px;width:30px;height:7px;line-height:7px;text-align:center;font-size:7px;color:#2e3033;transform:rotate(-90deg);">10</div>
<div style="position:absolute;left:229.7px;top:261.33px;width:30px;height:7px;line-height:7px;text-align:center;font-size:7px;color:#2e3033;transform:rotate(-90deg);">11</div>
<div style="position:absolute;left:229.7px;top:273.46px;width:30px;height:7px;line-height:7px;text-align:center;font-size:7px;color:#2e3033;transform:rotate(-90deg);">12</div>
<div style="position:absolute;left:229.7px;top:285.59px;width:30px;height:7px;line-height:7px;text-align:center;font-size:7px;color:#2e3033;transform:rotate(-90deg);">13</div>
<div style="position:absolute;left:229.7px;top:297.72px;width:30px;height:7px;line-height:7px;text-align:center;font-size:7px;color:#2e3033;transform:rotate(-90deg);">14</div>
<div style="position:absolute;left:229.7px;top:309.85px;width:30px;height:7px;line-height:7px;text-align:center;font-size:7px;color:#2e3033;transform:rotate(-90deg);">15</div>
<div style="position:absolute;left:229.7px;top:321.98px;width:30px;height:7px;line-height:7px;text-align:center;font-size:7px;color:#2e3033;transform:rotate(-90deg);">16</div>
<div style="position:absolute;left:229.7px;top:334.11px;width:30px;height:7px;line-height:7px;text-align:center;font-size:7px;color:#2e3033;transform:rotate(-90deg);">17</div>
<div style="position:absolute;left:229.7px;top:346.24px;width:30px;height:7px;line-height:7px;text-align:center;font-size:7px;color:#2e3033;transform:rotate(-90deg);">18</div>
<div style="position:absolute;left:229.7px;top:358.37px;width:30px;height:7px;line-height:7px;text-align:center;font-size:7px;color:#2e3033;transform:rotate(-90deg);">19</div>
<div style="position:absolute;left:229.7px;top:370.50px;width:30px;height:7px;line-height:7px;text-align:center;font-size:7px;color:#2e3033;transform:rotate(-90deg);">20</div>
<svg style="position:absolute;left:241px;top:131px;" width="12" height="255" viewBox="0 0 12 255"><rect x="9.8" y="2.93" width="1.7" height="1" fill="#505254"/><rect x="8" y="5.97" width="3.5" height="1" fill="#505254"/><rect x="9.8" y="9.00" width="1.7" height="1" fill="#505254"/><rect x="8" y="12.03" width="3.5" height="1" fill="#9a9b9d"/><rect x="9.8" y="15.06" width="1.7" height="1" fill="#505254"/><rect x="8" y="18.09" width="3.5" height="1" fill="#505254"/><rect x="9.8" y="21.13" width="1.7" height="1" fill="#505254"/><rect x="8" y="24.16" width="3.5" height="1" fill="#9a9b9d"/><rect x="9.8" y="27.19" width="1.7" height="1" fill="#505254"/><rect x="8" y="30.23" width="3.5" height="1" fill="#505254"/><rect x="9.8" y="33.26" width="1.7" height="1" fill="#505254"/><rect x="8" y="36.29" width="3.5" height="1" fill="#9a9b9d"/><rect x="9.8" y="39.32" width="1.7" height="1" fill="#505254"/><rect x="8" y="42.36" width="3.5" height="1" fill="#505254"/><rect x="9.8" y="45.39" width="1.7" height="1" fill="#505254"/><rect x="8" y="48.42" width="3.5" height="1" fill="#9a9b9d"/><rect x="9.8" y="51.45" width="1.7" height="1" fill="#505254"/><rect x="8" y="54.49" width="3.5" height="1" fill="#505254"/><rect x="9.8" y="57.52" width="1.7" height="1" fill="#505254"/><rect x="8" y="60.55" width="3.5" height="1" fill="#9a9b9d"/><rect x="9.8" y="63.58" width="1.7" height="1" fill="#505254"/><rect x="8" y="66.62" width="3.5" height="1" fill="#505254"/><rect x="9.8" y="69.65" width="1.7" height="1" fill="#505254"/><rect x="8" y="72.68" width="3.5" height="1" fill="#9a9b9d"/><rect x="9.8" y="75.71" width="1.7" height="1" fill="#505254"/><rect x="8" y="78.75" width="3.5" height="1" fill="#505254"/><rect x="9.8" y="81.78" width="1.7" height="1" fill="#505254"/><rect x="8" y="84.81" width="3.5" height="1" fill="#9a9b9d"/><rect x="9.8" y="87.84" width="1.7" height="1" fill="#505254"/><rect x="8" y="90.88" width="3.5" height="1" fill="#505254"/><rect x="9.8" y="93.91" width="1.7" height="1" fill="#505254"/><rect x="8" y="96.94" width="3.5" height="1" fill="#9a9b9d"/><rect x="9.8" y="99.97" width="1.7" height="1" fill="#505254"/><rect x="8" y="103.00" width="3.5" height="1" fill="#505254"/><rect x="9.8" y="106.04" width="1.7" height="1" fill="#505254"/><rect x="8" y="109.07" width="3.5" height="1" fill="#9a9b9d"/><rect x="9.8" y="112.10" width="1.7" height="1" fill="#505254"/><rect x="8" y="115.14" width="3.5" height="1" fill="#505254"/><rect x="9.8" y="118.17" width="1.7" height="1" fill="#505254"/><rect x="8" y="121.20" width="3.5" height="1" fill="#9a9b9d"/><rect x="9.8" y="124.23" width="1.7" height="1" fill="#505254"/><rect x="8" y="127.26" width="3.5" height="1" fill="#505254"/><rect x="9.8" y="130.30" width="1.7" height="1" fill="#505254"/><rect x="8" y="133.33" width="3.5" height="1" fill="#9a9b9d"/><rect x="9.8" y="136.36" width="1.7" height="1" fill="#505254"/><rect x="8" y="139.39" width="3.5" height="1" fill="#505254"/><rect x="9.8" y="142.43" width="1.7" height="1" fill="#505254"/><rect x="8" y="145.46" width="3.5" height="1" fill="#9a9b9d"/><rect x="9.8" y="148.49" width="1.7" height="1" fill="#505254"/><rect x="8" y="151.52" width="3.5" height="1" fill="#505254"/><rect x="9.8" y="154.56" width="1.7" height="1" fill="#505254"/><rect x="8" y="157.59" width="3.5" height="1" fill="#9a9b9d"/><rect x="9.8" y="160.62" width="1.7" height="1" fill="#505254"/><rect x="8" y="163.66" width="3.5" height="1" fill="#505254"/><rect x="9.8" y="166.69" width="1.7" height="1" fill="#505254"/><rect x="8" y="169.72" width="3.5" height="1" fill="#9a9b9d"/><rect x="9.8" y="172.75" width="1.7" height="1" fill="#505254"/><rect x="8" y="175.79" width="3.5" height="1" fill="#505254"/><rect x="9.8" y="178.82" width="1.7" height="1" fill="#505254"/><rect x="8" y="181.85" width="3.5" height="1" fill="#9a9b9d"/><rect x="9.8" y="184.88" width="1.7" height="1" fill="#505254"/><rect x="8" y="187.92" width="3.5" height="1" fill="#505254"/><rect x="9.8" y="190.95" width="1.7" height="1" fill="#505254"/><rect x="8" y="193.98" width="3.5" height="1" fill="#9a9b9d"/><rect x="9.8" y="197.01" width="1.7" height="1" fill="#505254"/><rect x="8" y="200.05" width="3.5" height="1" fill="#505254"/><rect x="9.8" y="203.08" width="1.7" height="1" fill="#505254"/><rect x="8" y="206.11" width="3.5" height="1" fill="#9a9b9d"/><rect x="9.8" y="209.14" width="1.7" height="1" fill="#505254"/><rect x="8" y="212.18" width="3.5" height="1" fill="#505254"/><rect x="9.8" y="215.21" width="1.7" height="1" fill="#505254"/><rect x="8" y="218.24" width="3.5" height="1" fill="#9a9b9d"/><rect x="9.8" y="221.27" width="1.7" height="1" fill="#505254"/><rect x="8" y="224.31" width="3.5" height="1" fill="#505254"/><rect x="9.8" y="227.34" width="1.7" height="1" fill="#505254"/><rect x="8" y="230.37" width="3.5" height="1" fill="#9a9b9d"/><rect x="9.8" y="233.40" width="1.7" height="1" fill="#505254"/><rect x="8" y="236.44" width="3.5" height="1" fill="#505254"/><rect x="9.8" y="239.47" width="1.7" height="1" fill="#505254"/><rect x="8" y="242.50" width="3.5" height="1" fill="#9a9b9d"/><rect x="9.8" y="245.53" width="1.7" height="1" fill="#505254"/><rect x="8" y="248.57" width="3.5" height="1" fill="#505254"/><rect x="9.8" y="251.60" width="1.7" height="1" fill="#505254"/></svg>
<div style="position:absolute;left:241.7px;top:351.2px;width:10px;height:1px;background:#232629;"></div>
<div style="position:absolute;left:253px;top:131px;width:360px;height:1px;background:#c4c5c7;"></div>
<div style="position:absolute;left:253px;top:386.5px;width:360px;height:1px;background:#c4c5c7;"></div>
<div style="position:absolute;left:261.5px;top:140.6px;width:344.4px;height:237.3px;border-radius:7px;box-shadow:0 1px 4px 2px rgba(0,0,0,0.8);"></div>
<div style="position:absolute;left:261.5px;top:140.6px;width:344.4px;height:237.3px;"><div style="position:absolute;left:0;top:0;width:344.4px;height:237.3px;border-radius:7px;overflow:hidden;background:radial-gradient(ellipse 35% 40% at 100% 0%, rgba(125,135,232,1) 0%, rgba(125,135,232,0) 100%),radial-gradient(ellipse 30% 35% at 100% 100%, rgba(38,118,212,0.8) 0%, rgba(38,118,212,0) 100%),radial-gradient(ellipse 30% 40% at 0% 0%, rgba(28,108,206,0.8) 0%, rgba(28,108,206,0) 100%),linear-gradient(47deg, rgba(95,165,232,0) 45%, rgba(95,165,232,0.85) 75%, rgba(95,165,232,0.45) 89%, rgba(95,165,232,0) 100%),radial-gradient(ellipse 60% 60% at 45% 45%, rgba(70,145,225,0.4) 0%, rgba(70,145,225,0) 100%),linear-gradient(90deg,#2e7ad6 0%,#3886da 45%,#3583d9 100%);"></div>
<svg style="position:absolute;left:-16.5px;top:-15.6px;" width="90" height="100" viewBox="0 0 90 100"><defs><filter id="gbm" x="-50%" y="-50%" width="200%" height="200%"><feGaussianBlur stdDeviation="1.6"/></filter><filter id="rbm" x="-20%" y="-20%" width="140%" height="140%"><feGaussianBlur stdDeviation="0.9"/></filter></defs><circle cx="50.50" cy="25.80" r="11.6" fill="none" stroke="#ffffff" stroke-width="4.2" opacity="0.35" filter="url(#rbm)"/><circle cx="50.50" cy="25.80" r="11.6" fill="none" stroke="#ffffff" stroke-width="2.2" opacity="1.0"/><circle cx="50.50" cy="25.80" r="15.4" fill="none" stroke="#ffffff" stroke-width="2.9" opacity="0.30" filter="url(#rbm)"/><circle cx="50.50" cy="25.80" r="15.4" fill="none" stroke="#ffffff" stroke-width="0.9" opacity="0.85"/><circle cx="20.20" cy="39.00" r="8.5" fill="none" stroke="#ffffff" stroke-width="3.6" opacity="0.33" filter="url(#rbm)"/><circle cx="20.20" cy="39.00" r="8.5" fill="none" stroke="#ffffff" stroke-width="1.6" opacity="0.95"/><circle cx="66.30" cy="44.10" r="4.3" fill="none" stroke="#ffffff" stroke-width="3.4" opacity="0.32" filter="url(#rbm)"/><circle cx="66.30" cy="44.10" r="4.3" fill="none" stroke="#ffffff" stroke-width="1.4" opacity="0.9"/><circle cx="46.40" cy="61.20" r="14.3" fill="none" stroke="#ffffff" stroke-width="3.4" opacity="0.33" filter="url(#rbm)"/><circle cx="46.40" cy="61.20" r="14.3" fill="none" stroke="#ffffff" stroke-width="1.4" opacity="0.95"/><circle cx="46.40" cy="61.20" r="18.3" fill="none" stroke="#ffffff" stroke-width="5.6" opacity="0.17" filter="url(#rbm)"/><circle cx="46.40" cy="61.20" r="18.3" fill="none" stroke="#ffffff" stroke-width="3.6" opacity="0.5" filter="url(#rbm)"/><circle cx="33.50" cy="55.50" r="14.2" fill="none" stroke="#ffffff" stroke-width="2.9" opacity="0.17" filter="url(#rbm)"/><circle cx="33.50" cy="55.50" r="14.2" fill="none" stroke="#ffffff" stroke-width="0.9" opacity="0.5" filter="url(#rbm)"/><circle cx="20.60" cy="71.40" r="8.3" fill="none" stroke="#ffffff" stroke-width="3.6" opacity="0.33" filter="url(#rbm)"/><circle cx="20.60" cy="71.40" r="8.3" fill="none" stroke="#ffffff" stroke-width="1.6" opacity="0.95"/><circle cx="31.10" cy="82.00" r="4.0" fill="none" stroke="#ffffff" stroke-width="3.3" opacity="0.32" filter="url(#rbm)"/><circle cx="31.10" cy="82.00" r="4.0" fill="none" stroke="#ffffff" stroke-width="1.3" opacity="0.9"/><circle cx="44.10" cy="27.60" r="3.62" fill="#ffffff" opacity="0.9" filter="url(#gbm)"/><circle cx="44.10" cy="27.60" r="1.88" fill="#ffffff" opacity="0.9"/><circle cx="20.90" cy="41.00" r="5.08" fill="#ffffff" opacity="1.0" filter="url(#gbm)"/><circle cx="20.90" cy="41.00" r="2.62" fill="#ffffff" opacity="1.0"/><circle cx="45.80" cy="67.30" r="5.22" fill="#ffffff" opacity="1.0" filter="url(#gbm)"/><circle cx="45.80" cy="67.30" r="2.70" fill="#ffffff" opacity="1.0"/><circle cx="32.20" cy="54.40" r="4.35" fill="#ffffff" opacity="0.9" filter="url(#gbm)"/><circle cx="32.20" cy="54.40" r="2.25" fill="#ffffff" opacity="0.9"/><circle cx="25.40" cy="70.80" r="3.62" fill="#ffffff" opacity="0.9" filter="url(#gbm)"/><circle cx="25.40" cy="70.80" r="1.88" fill="#ffffff" opacity="0.9"/><circle cx="32.20" cy="30.50" r="2.90" fill="#ffffff" opacity="0.7" filter="url(#gbm)"/><circle cx="32.20" cy="30.50" r="1.50" fill="#ffffff" opacity="0.7"/><circle cx="35.60" cy="37.30" r="3.62" fill="#ffffff" opacity="0.8" filter="url(#gbm)"/><circle cx="35.60" cy="37.30" r="1.88" fill="#ffffff" opacity="0.8"/><circle cx="56.00" cy="41.60" r="3.62" fill="#ffffff" opacity="0.7" filter="url(#gbm)"/><circle cx="56.00" cy="41.60" r="1.88" fill="#ffffff" opacity="0.7"/><circle cx="23.70" cy="30.50" r="2.90" fill="#ffffff" opacity="0.6" filter="url(#gbm)"/><circle cx="23.70" cy="30.50" r="1.50" fill="#ffffff" opacity="0.6"/></svg>
<svg style="position:absolute;left:0px;top:0px;" width="344.4" height="237.3" viewBox="0 0 344.4 237.3"><circle cx="326.20000000000005" cy="221.4" r="6.2" fill="none" stroke="#ffffff" stroke-width="2"/><path d="M-1.4 -1.8 H1.4 L1.9 1.8 H-1.9 Z" fill="#ffffff" transform="translate(317.80 221.40) rotate(270)"/><path d="M-1.4 -1.8 H1.4 L1.9 1.8 H-1.9 Z" fill="#ffffff" transform="translate(320.26 215.46) rotate(315)"/><path d="M-1.4 -1.8 H1.4 L1.9 1.8 H-1.9 Z" fill="#ffffff" transform="translate(320.26 227.34) rotate(225)"/><path d="M-1.4 -1.8 H1.4 L1.9 1.8 H-1.9 Z" fill="#ffffff" transform="translate(326.20 229.80) rotate(180)"/><path d="M-1.4 -1.8 H1.4 L1.9 1.8 H-1.9 Z" fill="#ffffff" transform="translate(332.14 227.34) rotate(135)"/><polygon points="324.90,209.60 328.60,209.60 328.60,215.40 332.40,209.60 337.20,209.60 331.00,217.10 337.20,223.90 333.10,223.90 328.60,218.80 328.60,224.60 324.90,224.60" fill="#ffffff" stroke="#2c79d6" stroke-width="0.9" stroke-linejoin="miter"/><polygon points="324.90,209.60 328.60,209.60 328.60,215.40 332.40,209.60 337.20,209.60 331.00,217.10 337.20,223.90 333.10,223.90 328.60,218.80 328.60,224.60 324.90,224.60" fill="#ffffff"/></svg>
<div style="position:absolute;left:249.0px;top:226.80px;font-size:8.5px;line-height:8.5px;color:#eef3fb;font-weight:normal;white-space:nowrap;font-family:'Liberation Sans', sans-serif;">Be Free. KDE</div>
<div style="position:absolute;left:57.60000000000002px;top:84.50px;font-size:28px;line-height:28px;color:#ffffff;font-weight:bold;white-space:nowrap;font-family:'Liberation Sans', sans-serif;letter-spacing:-0.5px;-webkit-text-stroke:0.9px #ffffff;">My Awesome Talk</div>
<div style="position:absolute;left:144.0px;top:126.01px;font-size:19.6px;line-height:19.6px;color:#ffffff;font-weight:bold;white-space:nowrap;font-family:'Liberation Sans', sans-serif;letter-spacing:0.8px;-webkit-text-stroke:0.6px #ffffff;">Name</div>
<div style="position:absolute;left:13.600000000000023px;top:212.91px;font-size:17px;line-height:17px;color:#ffffff;font-weight:bold;white-space:nowrap;font-family:'Liberation Sans', sans-serif;-webkit-text-stroke:0.5px #ffffff;">date | location | event</div></div>
<div style="position:absolute;left:382.6px;top:220px;width:1px;height:35.6px;background:#9a3050;"></div>
<div style="position:absolute;left:241px;top:405px;width:372px;height:22px;background:#eff0f1;border-top:1px solid #d3d4d6;box-sizing:border-box;"></div>
<div style="position:absolute;left:265px;top:411.69px;font-size:8.4px;line-height:8.4px;color:#232629;font-weight:normal;white-space:nowrap;font-family:'Liberation Sans', sans-serif;">Slide 1/4</div>
<div style="position:absolute;left:521.5px;top:411.69px;font-size:8.4px;line-height:8.4px;color:#232629;font-weight:normal;white-space:nowrap;font-family:'Liberation Sans', sans-serif;">Fit Page</div>
<div style="position:absolute;left:560.3px;top:414.2px;width:42.6px;height:3px;background:#c8c9cb;border-radius:2px;"></div>
<div style="position:absolute;left:560.3px;top:414.2px;width:18px;height:3px;background:#3daee9;border-radius:2px;"></div>
<div style="position:absolute;left:573.2px;top:410.9px;width:9.5px;height:9.5px;background:#fcfcfc;border:1px solid #b9babc;border-radius:50%;box-sizing:border-box;"></div>
<svg style="position:absolute;left:614px;top:85px;" width="104" height="14" viewBox="0 0 104 14"><g transform="translate(-614,-85)"><path d="M616.6 93.9 L619.8 90.3 L623 93.9 Z" fill="#232629"/><path d="M630.8 91.6 V90.6 A2 2 0 0 1 634.8 90.6" fill="none" stroke="#3b3d40" stroke-width="0.9"/><rect x="630.3" y="91.6" width="5" height="3" fill="none" stroke="#3b3d40" stroke-width="0.9"/><circle cx="698.2" cy="91.3" r="1.9" fill="none" stroke="#9a9c9e" stroke-width="0.8"/><path d="M708.8 89.4 L712.6 93.2 M712.6 89.4 L708.8 93.2" stroke="#9a9c9e" stroke-width="0.8"/></g></svg>
<div style="position:absolute;left:642px;top:88.94px;font-size:6.8px;line-height:6.8px;color:#232629;font-weight:normal;white-space:nowrap;font-family:'Liberation Sans', sans-serif;">Document</div>
<div style="position:absolute;left:639px;top:97.4px;width:65px;height:1px;background:#dfe0e2;"></div>
<div style="position:absolute;left:614px;top:99px;width:90.5px;height:309px;background:#ffffff;"></div>
<div style="position:absolute;left:616px;top:100px;width:88px;height:80.4px;background:#c8e2f6;"></div>
<div style="position:absolute;left:704px;top:99px;width:1px;height:309px;background:#e6e7e9;"></div>
<div style="position:absolute;left:717px;top:99px;width:1px;height:328px;background:#d0d1d3;"></div>
<div style="position:absolute;left:705.5px;top:99px;width:12.5px;height:309px;background:#fcfcfc;"></div>
<div style="position:absolute;left:708.2px;top:101px;width:3.7px;height:291.5px;background:#cbcccd;border-radius:2px;"></div>
<div style="position:absolute;left:629.8px;top:108.8px;width:61.51232px;height:43.00544000000001px;background:#ffffff;border-radius:2px;"></div>
<div style="position:absolute;left:630.5px;top:109.5px;width:60.112320000000004px;height:41.60544000000001px;box-shadow:0 0 0 0.9px rgba(110,110,115,0.85);border-radius:1.5px;"></div>
<div style="position:absolute;left:630.8px;top:109.8px;width:344.4px;height:237.3px;transform:scale(0.17280);transform-origin:0 0;"><div style="position:absolute;left:0;top:0;width:344.4px;height:237.3px;border-radius:7px;overflow:hidden;background:radial-gradient(ellipse 35% 40% at 100% 0%, rgba(125,135,232,1) 0%, rgba(125,135,232,0) 100%),radial-gradient(ellipse 30% 35% at 100% 100%, rgba(38,118,212,0.8) 0%, rgba(38,118,212,0) 100%),radial-gradient(ellipse 30% 40% at 0% 0%, rgba(28,108,206,0.8) 0%, rgba(28,108,206,0) 100%),linear-gradient(47deg, rgba(95,165,232,0) 45%, rgba(95,165,232,0.85) 75%, rgba(95,165,232,0.45) 89%, rgba(95,165,232,0) 100%),radial-gradient(ellipse 60% 60% at 45% 45%, rgba(70,145,225,0.4) 0%, rgba(70,145,225,0) 100%),linear-gradient(90deg,#2e7ad6 0%,#3886da 45%,#3583d9 100%);"></div>
<svg style="position:absolute;left:-16.5px;top:-15.6px;" width="90" height="100" viewBox="0 0 90 100"><defs><filter id="gbt0" x="-50%" y="-50%" width="200%" height="200%"><feGaussianBlur stdDeviation="1.6"/></filter><filter id="rbt0" x="-20%" y="-20%" width="140%" height="140%"><feGaussianBlur stdDeviation="0.9"/></filter></defs><circle cx="50.50" cy="25.80" r="11.6" fill="none" stroke="#ffffff" stroke-width="4.2" opacity="0.35" filter="url(#rbt0)"/><circle cx="50.50" cy="25.80" r="11.6" fill="none" stroke="#ffffff" stroke-width="2.2" opacity="1.0"/><circle cx="50.50" cy="25.80" r="15.4" fill="none" stroke="#ffffff" stroke-width="2.9" opacity="0.30" filter="url(#rbt0)"/><circle cx="50.50" cy="25.80" r="15.4" fill="none" stroke="#ffffff" stroke-width="0.9" opacity="0.85"/><circle cx="20.20" cy="39.00" r="8.5" fill="none" stroke="#ffffff" stroke-width="3.6" opacity="0.33" filter="url(#rbt0)"/><circle cx="20.20" cy="39.00" r="8.5" fill="none" stroke="#ffffff" stroke-width="1.6" opacity="0.95"/><circle cx="66.30" cy="44.10" r="4.3" fill="none" stroke="#ffffff" stroke-width="3.4" opacity="0.32" filter="url(#rbt0)"/><circle cx="66.30" cy="44.10" r="4.3" fill="none" stroke="#ffffff" stroke-width="1.4" opacity="0.9"/><circle cx="46.40" cy="61.20" r="14.3" fill="none" stroke="#ffffff" stroke-width="3.4" opacity="0.33" filter="url(#rbt0)"/><circle cx="46.40" cy="61.20" r="14.3" fill="none" stroke="#ffffff" stroke-width="1.4" opacity="0.95"/><circle cx="46.40" cy="61.20" r="18.3" fill="none" stroke="#ffffff" stroke-width="5.6" opacity="0.17" filter="url(#rbt0)"/><circle cx="46.40" cy="61.20" r="18.3" fill="none" stroke="#ffffff" stroke-width="3.6" opacity="0.5" filter="url(#rbt0)"/><circle cx="33.50" cy="55.50" r="14.2" fill="none" stroke="#ffffff" stroke-width="2.9" opacity="0.17" filter="url(#rbt0)"/><circle cx="33.50" cy="55.50" r="14.2" fill="none" stroke="#ffffff" stroke-width="0.9" opacity="0.5" filter="url(#rbt0)"/><circle cx="20.60" cy="71.40" r="8.3" fill="none" stroke="#ffffff" stroke-width="3.6" opacity="0.33" filter="url(#rbt0)"/><circle cx="20.60" cy="71.40" r="8.3" fill="none" stroke="#ffffff" stroke-width="1.6" opacity="0.95"/><circle cx="31.10" cy="82.00" r="4.0" fill="none" stroke="#ffffff" stroke-width="3.3" opacity="0.32" filter="url(#rbt0)"/><circle cx="31.10" cy="82.00" r="4.0" fill="none" stroke="#ffffff" stroke-width="1.3" opacity="0.9"/><circle cx="44.10" cy="27.60" r="3.62" fill="#ffffff" opacity="0.9" filter="url(#gbt0)"/><circle cx="44.10" cy="27.60" r="1.88" fill="#ffffff" opacity="0.9"/><circle cx="20.90" cy="41.00" r="5.08" fill="#ffffff" opacity="1.0" filter="url(#gbt0)"/><circle cx="20.90" cy="41.00" r="2.62" fill="#ffffff" opacity="1.0"/><circle cx="45.80" cy="67.30" r="5.22" fill="#ffffff" opacity="1.0" filter="url(#gbt0)"/><circle cx="45.80" cy="67.30" r="2.70" fill="#ffffff" opacity="1.0"/><circle cx="32.20" cy="54.40" r="4.35" fill="#ffffff" opacity="0.9" filter="url(#gbt0)"/><circle cx="32.20" cy="54.40" r="2.25" fill="#ffffff" opacity="0.9"/><circle cx="25.40" cy="70.80" r="3.62" fill="#ffffff" opacity="0.9" filter="url(#gbt0)"/><circle cx="25.40" cy="70.80" r="1.88" fill="#ffffff" opacity="0.9"/><circle cx="32.20" cy="30.50" r="2.90" fill="#ffffff" opacity="0.7" filter="url(#gbt0)"/><circle cx="32.20" cy="30.50" r="1.50" fill="#ffffff" opacity="0.7"/><circle cx="35.60" cy="37.30" r="3.62" fill="#ffffff" opacity="0.8" filter="url(#gbt0)"/><circle cx="35.60" cy="37.30" r="1.88" fill="#ffffff" opacity="0.8"/><circle cx="56.00" cy="41.60" r="3.62" fill="#ffffff" opacity="0.7" filter="url(#gbt0)"/><circle cx="56.00" cy="41.60" r="1.88" fill="#ffffff" opacity="0.7"/><circle cx="23.70" cy="30.50" r="2.90" fill="#ffffff" opacity="0.6" filter="url(#gbt0)"/><circle cx="23.70" cy="30.50" r="1.50" fill="#ffffff" opacity="0.6"/></svg>
<svg style="position:absolute;left:0px;top:0px;" width="344.4" height="237.3" viewBox="0 0 344.4 237.3"><circle cx="326.20000000000005" cy="221.4" r="6.2" fill="none" stroke="#ffffff" stroke-width="2"/><path d="M-1.4 -1.8 H1.4 L1.9 1.8 H-1.9 Z" fill="#ffffff" transform="translate(317.80 221.40) rotate(270)"/><path d="M-1.4 -1.8 H1.4 L1.9 1.8 H-1.9 Z" fill="#ffffff" transform="translate(320.26 215.46) rotate(315)"/><path d="M-1.4 -1.8 H1.4 L1.9 1.8 H-1.9 Z" fill="#ffffff" transform="translate(320.26 227.34) rotate(225)"/><path d="M-1.4 -1.8 H1.4 L1.9 1.8 H-1.9 Z" fill="#ffffff" transform="translate(326.20 229.80) rotate(180)"/><path d="M-1.4 -1.8 H1.4 L1.9 1.8 H-1.9 Z" fill="#ffffff" transform="translate(332.14 227.34) rotate(135)"/><polygon points="324.90,209.60 328.60,209.60 328.60,215.40 332.40,209.60 337.20,209.60 331.00,217.10 337.20,223.90 333.10,223.90 328.60,218.80 328.60,224.60 324.90,224.60" fill="#ffffff" stroke="#2c79d6" stroke-width="0.9" stroke-linejoin="miter"/><polygon points="324.90,209.60 328.60,209.60 328.60,215.40 332.40,209.60 337.20,209.60 331.00,217.10 337.20,223.90 333.10,223.90 328.60,218.80 328.60,224.60 324.90,224.60" fill="#ffffff"/></svg>
<div style="position:absolute;left:249.0px;top:226.80px;font-size:8.5px;line-height:8.5px;color:#eef3fb;font-weight:normal;white-space:nowrap;font-family:'Liberation Sans', sans-serif;">Be Free. KDE</div>
<div style="position:absolute;left:57.60000000000002px;top:84.50px;font-size:28px;line-height:28px;color:#ffffff;font-weight:bold;white-space:nowrap;font-family:'Liberation Sans', sans-serif;letter-spacing:-0.5px;-webkit-text-stroke:2.6px #ffffff;">My Awesome Talk</div>
<div style="position:absolute;left:144.0px;top:126.01px;font-size:19.6px;line-height:19.6px;color:#ffffff;font-weight:bold;white-space:nowrap;font-family:'Liberation Sans', sans-serif;letter-spacing:0.8px;-webkit-text-stroke:2.2px #ffffff;">Name</div>
<div style="position:absolute;left:13.600000000000023px;top:212.91px;font-size:17px;line-height:17px;color:#ffffff;font-weight:bold;white-space:nowrap;font-family:'Liberation Sans', sans-serif;-webkit-text-stroke:2.2px #ffffff;">date | location | event</div></div>
<div style="position:absolute;left:360.20000000000005px;width:600px;text-align:center;top:163.93px;font-size:6.7px;line-height:6.7px;color:#232629;font-weight:normal;white-space:nowrap;font-family:'Liberation Sans', sans-serif;">Slide 1</div>
<div style="position:absolute;left:629.8px;top:189.2px;width:61.51232px;height:43.00544000000001px;background:#ffffff;border-radius:2px;"></div>
<div style="position:absolute;left:630.5px;top:189.89999999999998px;width:60.112320000000004px;height:41.60544000000001px;box-shadow:0 0 0 0.9px rgba(110,110,115,0.85);border-radius:1.5px;"></div>
<div style="position:absolute;left:630.8px;top:190.2px;width:344.4px;height:237.3px;transform:scale(0.17280);transform-origin:0 0;"><div style="position:absolute;left:0;top:0;width:344.4px;height:237.3px;border-radius:7px;overflow:hidden;background:radial-gradient(ellipse 35% 40% at 100% 0%, rgba(125,135,232,1) 0%, rgba(125,135,232,0) 100%),radial-gradient(ellipse 30% 35% at 100% 100%, rgba(38,118,212,0.8) 0%, rgba(38,118,212,0) 100%),radial-gradient(ellipse 30% 40% at 0% 0%, rgba(28,108,206,0.8) 0%, rgba(28,108,206,0) 100%),linear-gradient(47deg, rgba(95,165,232,0) 45%, rgba(95,165,232,0.85) 75%, rgba(95,165,232,0.45) 89%, rgba(95,165,232,0) 100%),radial-gradient(ellipse 60% 60% at 45% 45%, rgba(70,145,225,0.4) 0%, rgba(70,145,225,0) 100%),linear-gradient(90deg,#2e7ad6 0%,#3886da 45%,#3583d9 100%);"></div>
<svg style="position:absolute;left:-16.5px;top:-15.6px;" width="90" height="100" viewBox="0 0 90 100"><defs><filter id="gbt1" x="-50%" y="-50%" width="200%" height="200%"><feGaussianBlur stdDeviation="1.6"/></filter><filter id="rbt1" x="-20%" y="-20%" width="140%" height="140%"><feGaussianBlur stdDeviation="0.9"/></filter></defs><circle cx="50.50" cy="25.80" r="11.6" fill="none" stroke="#ffffff" stroke-width="4.2" opacity="0.35" filter="url(#rbt1)"/><circle cx="50.50" cy="25.80" r="11.6" fill="none" stroke="#ffffff" stroke-width="2.2" opacity="1.0"/><circle cx="50.50" cy="25.80" r="15.4" fill="none" stroke="#ffffff" stroke-width="2.9" opacity="0.30" filter="url(#rbt1)"/><circle cx="50.50" cy="25.80" r="15.4" fill="none" stroke="#ffffff" stroke-width="0.9" opacity="0.85"/><circle cx="20.20" cy="39.00" r="8.5" fill="none" stroke="#ffffff" stroke-width="3.6" opacity="0.33" filter="url(#rbt1)"/><circle cx="20.20" cy="39.00" r="8.5" fill="none" stroke="#ffffff" stroke-width="1.6" opacity="0.95"/><circle cx="66.30" cy="44.10" r="4.3" fill="none" stroke="#ffffff" stroke-width="3.4" opacity="0.32" filter="url(#rbt1)"/><circle cx="66.30" cy="44.10" r="4.3" fill="none" stroke="#ffffff" stroke-width="1.4" opacity="0.9"/><circle cx="46.40" cy="61.20" r="14.3" fill="none" stroke="#ffffff" stroke-width="3.4" opacity="0.33" filter="url(#rbt1)"/><circle cx="46.40" cy="61.20" r="14.3" fill="none" stroke="#ffffff" stroke-width="1.4" opacity="0.95"/><circle cx="46.40" cy="61.20" r="18.3" fill="none" stroke="#ffffff" stroke-width="5.6" opacity="0.17" filter="url(#rbt1)"/><circle cx="46.40" cy="61.20" r="18.3" fill="none" stroke="#ffffff" stroke-width="3.6" opacity="0.5" filter="url(#rbt1)"/><circle cx="33.50" cy="55.50" r="14.2" fill="none" stroke="#ffffff" stroke-width="2.9" opacity="0.17" filter="url(#rbt1)"/><circle cx="33.50" cy="55.50" r="14.2" fill="none" stroke="#ffffff" stroke-width="0.9" opacity="0.5" filter="url(#rbt1)"/><circle cx="20.60" cy="71.40" r="8.3" fill="none" stroke="#ffffff" stroke-width="3.6" opacity="0.33" filter="url(#rbt1)"/><circle cx="20.60" cy="71.40" r="8.3" fill="none" stroke="#ffffff" stroke-width="1.6" opacity="0.95"/><circle cx="31.10" cy="82.00" r="4.0" fill="none" stroke="#ffffff" stroke-width="3.3" opacity="0.32" filter="url(#rbt1)"/><circle cx="31.10" cy="82.00" r="4.0" fill="none" stroke="#ffffff" stroke-width="1.3" opacity="0.9"/><circle cx="44.10" cy="27.60" r="3.62" fill="#ffffff" opacity="0.9" filter="url(#gbt1)"/><circle cx="44.10" cy="27.60" r="1.88" fill="#ffffff" opacity="0.9"/><circle cx="20.90" cy="41.00" r="5.08" fill="#ffffff" opacity="1.0" filter="url(#gbt1)"/><circle cx="20.90" cy="41.00" r="2.62" fill="#ffffff" opacity="1.0"/><circle cx="45.80" cy="67.30" r="5.22" fill="#ffffff" opacity="1.0" filter="url(#gbt1)"/><circle cx="45.80" cy="67.30" r="2.70" fill="#ffffff" opacity="1.0"/><circle cx="32.20" cy="54.40" r="4.35" fill="#ffffff" opacity="0.9" filter="url(#gbt1)"/><circle cx="32.20" cy="54.40" r="2.25" fill="#ffffff" opacity="0.9"/><circle cx="25.40" cy="70.80" r="3.62" fill="#ffffff" opacity="0.9" filter="url(#gbt1)"/><circle cx="25.40" cy="70.80" r="1.88" fill="#ffffff" opacity="0.9"/><circle cx="32.20" cy="30.50" r="2.90" fill="#ffffff" opacity="0.7" filter="url(#gbt1)"/><circle cx="32.20" cy="30.50" r="1.50" fill="#ffffff" opacity="0.7"/><circle cx="35.60" cy="37.30" r="3.62" fill="#ffffff" opacity="0.8" filter="url(#gbt1)"/><circle cx="35.60" cy="37.30" r="1.88" fill="#ffffff" opacity="0.8"/><circle cx="56.00" cy="41.60" r="3.62" fill="#ffffff" opacity="0.7" filter="url(#gbt1)"/><circle cx="56.00" cy="41.60" r="1.88" fill="#ffffff" opacity="0.7"/><circle cx="23.70" cy="30.50" r="2.90" fill="#ffffff" opacity="0.6" filter="url(#gbt1)"/><circle cx="23.70" cy="30.50" r="1.50" fill="#ffffff" opacity="0.6"/></svg>
<svg style="position:absolute;left:0px;top:0px;" width="344.4" height="237.3" viewBox="0 0 344.4 237.3"><circle cx="326.20000000000005" cy="221.4" r="6.2" fill="none" stroke="#ffffff" stroke-width="2"/><path d="M-1.4 -1.8 H1.4 L1.9 1.8 H-1.9 Z" fill="#ffffff" transform="translate(317.80 221.40) rotate(270)"/><path d="M-1.4 -1.8 H1.4 L1.9 1.8 H-1.9 Z" fill="#ffffff" transform="translate(320.26 215.46) rotate(315)"/><path d="M-1.4 -1.8 H1.4 L1.9 1.8 H-1.9 Z" fill="#ffffff" transform="translate(320.26 227.34) rotate(225)"/><path d="M-1.4 -1.8 H1.4 L1.9 1.8 H-1.9 Z" fill="#ffffff" transform="translate(326.20 229.80) rotate(180)"/><path d="M-1.4 -1.8 H1.4 L1.9 1.8 H-1.9 Z" fill="#ffffff" transform="translate(332.14 227.34) rotate(135)"/><polygon points="324.90,209.60 328.60,209.60 328.60,215.40 332.40,209.60 337.20,209.60 331.00,217.10 337.20,223.90 333.10,223.90 328.60,218.80 328.60,224.60 324.90,224.60" fill="#ffffff" stroke="#2c79d6" stroke-width="0.9" stroke-linejoin="miter"/><polygon points="324.90,209.60 328.60,209.60 328.60,215.40 332.40,209.60 337.20,209.60 331.00,217.10 337.20,223.90 333.10,223.90 328.60,218.80 328.60,224.60 324.90,224.60" fill="#ffffff"/></svg>
<div style="position:absolute;left:249.0px;top:226.80px;font-size:8.5px;line-height:8.5px;color:#eef3fb;font-weight:normal;white-space:nowrap;font-family:'Liberation Sans', sans-serif;">Be Free. KDE</div>
<div style="position:absolute;left:64px;top:28.5px;width:280.4px;height:1.5px;background:rgba(255,255,255,0.35);"></div>
<div style="position:absolute;left:0px;top:220px;width:314.4px;height:1.5px;background:rgba(255,255,255,0.35);"></div>
<div style="position:absolute;left:64px;top:5.68px;font-size:24px;line-height:24px;color:#ffffff;font-weight:bold;white-space:nowrap;font-family:'Liberation Sans', sans-serif;-webkit-text-stroke:2px #ffffff;">About me</div>
<div style="position:absolute;left:70px;top:55.53px;font-size:10px;line-height:10px;color:#e6eefa;font-weight:normal;white-space:nowrap;font-family:'Liberation Sans', sans-serif;-webkit-text-stroke:0.8px #e6eefa;">Name</div>
<div style="position:absolute;left:70px;top:111.53px;font-size:10px;line-height:10px;color:#e6eefa;font-weight:normal;white-space:nowrap;font-family:'Liberation Sans', sans-serif;-webkit-text-stroke:0.8px #e6eefa;">Description</div>
<div style="position:absolute;left:267px;top:38px;width:67px;height:70px;background:#ffffff;"></div>
<div style="position:absolute;left:290px;top:46px;width:24px;height:24px;border-radius:50%;background:#2f6fc0;"></div>
<div style="position:absolute;left:287px;top:66px;width:30px;height:42px;border-radius:12px 12px 0 0;background:#2f6fc0;"></div></div>
<div style="position:absolute;left:360.20000000000005px;width:600px;text-align:center;top:244.33px;font-size:6.7px;line-height:6.7px;color:#232629;font-weight:normal;white-space:nowrap;font-family:'Liberation Sans', sans-serif;">Slide 2</div>
<div style="position:absolute;left:629.8px;top:269.6px;width:61.51232px;height:43.00544000000001px;background:#ffffff;border-radius:2px;"></div>
<div style="position:absolute;left:630.5px;top:270.3px;width:60.112320000000004px;height:41.60544000000001px;box-shadow:0 0 0 0.9px rgba(110,110,115,0.85);border-radius:1.5px;"></div>
<div style="position:absolute;left:630.8px;top:270.6px;width:344.4px;height:237.3px;transform:scale(0.17280);transform-origin:0 0;"><div style="position:absolute;left:0;top:0;width:344.4px;height:237.3px;border-radius:7px;overflow:hidden;background:radial-gradient(ellipse 35% 40% at 100% 0%, rgba(125,135,232,1) 0%, rgba(125,135,232,0) 100%),radial-gradient(ellipse 30% 35% at 100% 100%, rgba(38,118,212,0.8) 0%, rgba(38,118,212,0) 100%),radial-gradient(ellipse 30% 40% at 0% 0%, rgba(28,108,206,0.8) 0%, rgba(28,108,206,0) 100%),linear-gradient(47deg, rgba(95,165,232,0) 45%, rgba(95,165,232,0.85) 75%, rgba(95,165,232,0.45) 89%, rgba(95,165,232,0) 100%),radial-gradient(ellipse 60% 60% at 45% 45%, rgba(70,145,225,0.4) 0%, rgba(70,145,225,0) 100%),linear-gradient(90deg,#2e7ad6 0%,#3886da 45%,#3583d9 100%);"></div>
<svg style="position:absolute;left:-16.5px;top:-15.6px;" width="90" height="100" viewBox="0 0 90 100"><defs><filter id="gbt2" x="-50%" y="-50%" width="200%" height="200%"><feGaussianBlur stdDeviation="1.6"/></filter><filter id="rbt2" x="-20%" y="-20%" width="140%" height="140%"><feGaussianBlur stdDeviation="0.9"/></filter></defs><circle cx="50.50" cy="25.80" r="11.6" fill="none" stroke="#ffffff" stroke-width="4.2" opacity="0.35" filter="url(#rbt2)"/><circle cx="50.50" cy="25.80" r="11.6" fill="none" stroke="#ffffff" stroke-width="2.2" opacity="1.0"/><circle cx="50.50" cy="25.80" r="15.4" fill="none" stroke="#ffffff" stroke-width="2.9" opacity="0.30" filter="url(#rbt2)"/><circle cx="50.50" cy="25.80" r="15.4" fill="none" stroke="#ffffff" stroke-width="0.9" opacity="0.85"/><circle cx="20.20" cy="39.00" r="8.5" fill="none" stroke="#ffffff" stroke-width="3.6" opacity="0.33" filter="url(#rbt2)"/><circle cx="20.20" cy="39.00" r="8.5" fill="none" stroke="#ffffff" stroke-width="1.6" opacity="0.95"/><circle cx="66.30" cy="44.10" r="4.3" fill="none" stroke="#ffffff" stroke-width="3.4" opacity="0.32" filter="url(#rbt2)"/><circle cx="66.30" cy="44.10" r="4.3" fill="none" stroke="#ffffff" stroke-width="1.4" opacity="0.9"/><circle cx="46.40" cy="61.20" r="14.3" fill="none" stroke="#ffffff" stroke-width="3.4" opacity="0.33" filter="url(#rbt2)"/><circle cx="46.40" cy="61.20" r="14.3" fill="none" stroke="#ffffff" stroke-width="1.4" opacity="0.95"/><circle cx="46.40" cy="61.20" r="18.3" fill="none" stroke="#ffffff" stroke-width="5.6" opacity="0.17" filter="url(#rbt2)"/><circle cx="46.40" cy="61.20" r="18.3" fill="none" stroke="#ffffff" stroke-width="3.6" opacity="0.5" filter="url(#rbt2)"/><circle cx="33.50" cy="55.50" r="14.2" fill="none" stroke="#ffffff" stroke-width="2.9" opacity="0.17" filter="url(#rbt2)"/><circle cx="33.50" cy="55.50" r="14.2" fill="none" stroke="#ffffff" stroke-width="0.9" opacity="0.5" filter="url(#rbt2)"/><circle cx="20.60" cy="71.40" r="8.3" fill="none" stroke="#ffffff" stroke-width="3.6" opacity="0.33" filter="url(#rbt2)"/><circle cx="20.60" cy="71.40" r="8.3" fill="none" stroke="#ffffff" stroke-width="1.6" opacity="0.95"/><circle cx="31.10" cy="82.00" r="4.0" fill="none" stroke="#ffffff" stroke-width="3.3" opacity="0.32" filter="url(#rbt2)"/><circle cx="31.10" cy="82.00" r="4.0" fill="none" stroke="#ffffff" stroke-width="1.3" opacity="0.9"/><circle cx="44.10" cy="27.60" r="3.62" fill="#ffffff" opacity="0.9" filter="url(#gbt2)"/><circle cx="44.10" cy="27.60" r="1.88" fill="#ffffff" opacity="0.9"/><circle cx="20.90" cy="41.00" r="5.08" fill="#ffffff" opacity="1.0" filter="url(#gbt2)"/><circle cx="20.90" cy="41.00" r="2.62" fill="#ffffff" opacity="1.0"/><circle cx="45.80" cy="67.30" r="5.22" fill="#ffffff" opacity="1.0" filter="url(#gbt2)"/><circle cx="45.80" cy="67.30" r="2.70" fill="#ffffff" opacity="1.0"/><circle cx="32.20" cy="54.40" r="4.35" fill="#ffffff" opacity="0.9" filter="url(#gbt2)"/><circle cx="32.20" cy="54.40" r="2.25" fill="#ffffff" opacity="0.9"/><circle cx="25.40" cy="70.80" r="3.62" fill="#ffffff" opacity="0.9" filter="url(#gbt2)"/><circle cx="25.40" cy="70.80" r="1.88" fill="#ffffff" opacity="0.9"/><circle cx="32.20" cy="30.50" r="2.90" fill="#ffffff" opacity="0.7" filter="url(#gbt2)"/><circle cx="32.20" cy="30.50" r="1.50" fill="#ffffff" opacity="0.7"/><circle cx="35.60" cy="37.30" r="3.62" fill="#ffffff" opacity="0.8" filter="url(#gbt2)"/><circle cx="35.60" cy="37.30" r="1.88" fill="#ffffff" opacity="0.8"/><circle cx="56.00" cy="41.60" r="3.62" fill="#ffffff" opacity="0.7" filter="url(#gbt2)"/><circle cx="56.00" cy="41.60" r="1.88" fill="#ffffff" opacity="0.7"/><circle cx="23.70" cy="30.50" r="2.90" fill="#ffffff" opacity="0.6" filter="url(#gbt2)"/><circle cx="23.70" cy="30.50" r="1.50" fill="#ffffff" opacity="0.6"/></svg>
<svg style="position:absolute;left:0px;top:0px;" width="344.4" height="237.3" viewBox="0 0 344.4 237.3"><circle cx="326.20000000000005" cy="221.4" r="6.2" fill="none" stroke="#ffffff" stroke-width="2"/><path d="M-1.4 -1.8 H1.4 L1.9 1.8 H-1.9 Z" fill="#ffffff" transform="translate(317.80 221.40) rotate(270)"/><path d="M-1.4 -1.8 H1.4 L1.9 1.8 H-1.9 Z" fill="#ffffff" transform="translate(320.26 215.46) rotate(315)"/><path d="M-1.4 -1.8 H1.4 L1.9 1.8 H-1.9 Z" fill="#ffffff" transform="translate(320.26 227.34) rotate(225)"/><path d="M-1.4 -1.8 H1.4 L1.9 1.8 H-1.9 Z" fill="#ffffff" transform="translate(326.20 229.80) rotate(180)"/><path d="M-1.4 -1.8 H1.4 L1.9 1.8 H-1.9 Z" fill="#ffffff" transform="translate(332.14 227.34) rotate(135)"/><polygon points="324.90,209.60 328.60,209.60 328.60,215.40 332.40,209.60 337.20,209.60 331.00,217.10 337.20,223.90 333.10,223.90 328.60,218.80 328.60,224.60 324.90,224.60" fill="#ffffff" stroke="#2c79d6" stroke-width="0.9" stroke-linejoin="miter"/><polygon points="324.90,209.60 328.60,209.60 328.60,215.40 332.40,209.60 337.20,209.60 331.00,217.10 337.20,223.90 333.10,223.90 328.60,218.80 328.60,224.60 324.90,224.60" fill="#ffffff"/></svg>
<div style="position:absolute;left:249.0px;top:226.80px;font-size:8.5px;line-height:8.5px;color:#eef3fb;font-weight:normal;white-space:nowrap;font-family:'Liberation Sans', sans-serif;">Be Free. KDE</div>
<div style="position:absolute;left:64px;top:28.5px;width:280.4px;height:1.5px;background:rgba(255,255,255,0.35);"></div>
<div style="position:absolute;left:0px;top:220px;width:314.4px;height:1.5px;background:rgba(255,255,255,0.35);"></div></div>
<div style="position:absolute;left:360.20000000000005px;width:600px;text-align:center;top:324.73px;font-size:6.7px;line-height:6.7px;color:#232629;font-weight:normal;white-space:nowrap;font-family:'Liberation Sans', sans-serif;">Slide 3</div>
<div style="position:absolute;left:629.8px;top:350.0px;width:61.51232px;height:43.00544000000001px;background:#ffffff;border-radius:2px;"></div>
<div style="position:absolute;left:630.5px;top:350.7px;width:60.112320000000004px;height:41.60544000000001px;box-shadow:0 0 0 0.9px rgba(110,110,115,0.85);border-radius:1.5px;"></div>
<div style="position:absolute;left:630.8px;top:351.0px;width:344.4px;height:237.3px;transform:scale(0.17280);transform-origin:0 0;"><div style="position:absolute;left:0;top:0;width:344.4px;height:237.3px;border-radius:7px;overflow:hidden;background:radial-gradient(ellipse 35% 40% at 100% 0%, rgba(125,135,232,1) 0%, rgba(125,135,232,0) 100%),radial-gradient(ellipse 30% 35% at 100% 100%, rgba(38,118,212,0.8) 0%, rgba(38,118,212,0) 100%),radial-gradient(ellipse 30% 40% at 0% 0%, rgba(28,108,206,0.8) 0%, rgba(28,108,206,0) 100%),linear-gradient(47deg, rgba(95,165,232,0) 45%, rgba(95,165,232,0.85) 75%, rgba(95,165,232,0.45) 89%, rgba(95,165,232,0) 100%),radial-gradient(ellipse 60% 60% at 45% 45%, rgba(70,145,225,0.4) 0%, rgba(70,145,225,0) 100%),linear-gradient(90deg,#2e7ad6 0%,#3886da 45%,#3583d9 100%);"></div>
<svg style="position:absolute;left:-16.5px;top:-15.6px;" width="90" height="100" viewBox="0 0 90 100"><defs><filter id="gbt3" x="-50%" y="-50%" width="200%" height="200%"><feGaussianBlur stdDeviation="1.6"/></filter><filter id="rbt3" x="-20%" y="-20%" width="140%" height="140%"><feGaussianBlur stdDeviation="0.9"/></filter></defs><circle cx="50.50" cy="25.80" r="11.6" fill="none" stroke="#ffffff" stroke-width="4.2" opacity="0.35" filter="url(#rbt3)"/><circle cx="50.50" cy="25.80" r="11.6" fill="none" stroke="#ffffff" stroke-width="2.2" opacity="1.0"/><circle cx="50.50" cy="25.80" r="15.4" fill="none" stroke="#ffffff" stroke-width="2.9" opacity="0.30" filter="url(#rbt3)"/><circle cx="50.50" cy="25.80" r="15.4" fill="none" stroke="#ffffff" stroke-width="0.9" opacity="0.85"/><circle cx="20.20" cy="39.00" r="8.5" fill="none" stroke="#ffffff" stroke-width="3.6" opacity="0.33" filter="url(#rbt3)"/><circle cx="20.20" cy="39.00" r="8.5" fill="none" stroke="#ffffff" stroke-width="1.6" opacity="0.95"/><circle cx="66.30" cy="44.10" r="4.3" fill="none" stroke="#ffffff" stroke-width="3.4" opacity="0.32" filter="url(#rbt3)"/><circle cx="66.30" cy="44.10" r="4.3" fill="none" stroke="#ffffff" stroke-width="1.4" opacity="0.9"/><circle cx="46.40" cy="61.20" r="14.3" fill="none" stroke="#ffffff" stroke-width="3.4" opacity="0.33" filter="url(#rbt3)"/><circle cx="46.40" cy="61.20" r="14.3" fill="none" stroke="#ffffff" stroke-width="1.4" opacity="0.95"/><circle cx="46.40" cy="61.20" r="18.3" fill="none" stroke="#ffffff" stroke-width="5.6" opacity="0.17" filter="url(#rbt3)"/><circle cx="46.40" cy="61.20" r="18.3" fill="none" stroke="#ffffff" stroke-width="3.6" opacity="0.5" filter="url(#rbt3)"/><circle cx="33.50" cy="55.50" r="14.2" fill="none" stroke="#ffffff" stroke-width="2.9" opacity="0.17" filter="url(#rbt3)"/><circle cx="33.50" cy="55.50" r="14.2" fill="none" stroke="#ffffff" stroke-width="0.9" opacity="0.5" filter="url(#rbt3)"/><circle cx="20.60" cy="71.40" r="8.3" fill="none" stroke="#ffffff" stroke-width="3.6" opacity="0.33" filter="url(#rbt3)"/><circle cx="20.60" cy="71.40" r="8.3" fill="none" stroke="#ffffff" stroke-width="1.6" opacity="0.95"/><circle cx="31.10" cy="82.00" r="4.0" fill="none" stroke="#ffffff" stroke-width="3.3" opacity="0.32" filter="url(#rbt3)"/><circle cx="31.10" cy="82.00" r="4.0" fill="none" stroke="#ffffff" stroke-width="1.3" opacity="0.9"/><circle cx="44.10" cy="27.60" r="3.62" fill="#ffffff" opacity="0.9" filter="url(#gbt3)"/><circle cx="44.10" cy="27.60" r="1.88" fill="#ffffff" opacity="0.9"/><circle cx="20.90" cy="41.00" r="5.08" fill="#ffffff" opacity="1.0" filter="url(#gbt3)"/><circle cx="20.90" cy="41.00" r="2.62" fill="#ffffff" opacity="1.0"/><circle cx="45.80" cy="67.30" r="5.22" fill="#ffffff" opacity="1.0" filter="url(#gbt3)"/><circle cx="45.80" cy="67.30" r="2.70" fill="#ffffff" opacity="1.0"/><circle cx="32.20" cy="54.40" r="4.35" fill="#ffffff" opacity="0.9" filter="url(#gbt3)"/><circle cx="32.20" cy="54.40" r="2.25" fill="#ffffff" opacity="0.9"/><circle cx="25.40" cy="70.80" r="3.62" fill="#ffffff" opacity="0.9" filter="url(#gbt3)"/><circle cx="25.40" cy="70.80" r="1.88" fill="#ffffff" opacity="0.9"/><circle cx="32.20" cy="30.50" r="2.90" fill="#ffffff" opacity="0.7" filter="url(#gbt3)"/><circle cx="32.20" cy="30.50" r="1.50" fill="#ffffff" opacity="0.7"/><circle cx="35.60" cy="37.30" r="3.62" fill="#ffffff" opacity="0.8" filter="url(#gbt3)"/><circle cx="35.60" cy="37.30" r="1.88" fill="#ffffff" opacity="0.8"/><circle cx="56.00" cy="41.60" r="3.62" fill="#ffffff" opacity="0.7" filter="url(#gbt3)"/><circle cx="56.00" cy="41.60" r="1.88" fill="#ffffff" opacity="0.7"/><circle cx="23.70" cy="30.50" r="2.90" fill="#ffffff" opacity="0.6" filter="url(#gbt3)"/><circle cx="23.70" cy="30.50" r="1.50" fill="#ffffff" opacity="0.6"/></svg>
<svg style="position:absolute;left:0px;top:0px;" width="344.4" height="237.3" viewBox="0 0 344.4 237.3"><circle cx="326.20000000000005" cy="221.4" r="6.2" fill="none" stroke="#ffffff" stroke-width="2"/><path d="M-1.4 -1.8 H1.4 L1.9 1.8 H-1.9 Z" fill="#ffffff" transform="translate(317.80 221.40) rotate(270)"/><path d="M-1.4 -1.8 H1.4 L1.9 1.8 H-1.9 Z" fill="#ffffff" transform="translate(320.26 215.46) rotate(315)"/><path d="M-1.4 -1.8 H1.4 L1.9 1.8 H-1.9 Z" fill="#ffffff" transform="translate(320.26 227.34) rotate(225)"/><path d="M-1.4 -1.8 H1.4 L1.9 1.8 H-1.9 Z" fill="#ffffff" transform="translate(326.20 229.80) rotate(180)"/><path d="M-1.4 -1.8 H1.4 L1.9 1.8 H-1.9 Z" fill="#ffffff" transform="translate(332.14 227.34) rotate(135)"/><polygon points="324.90,209.60 328.60,209.60 328.60,215.40 332.40,209.60 337.20,209.60 331.00,217.10 337.20,223.90 333.10,223.90 328.60,218.80 328.60,224.60 324.90,224.60" fill="#ffffff" stroke="#2c79d6" stroke-width="0.9" stroke-linejoin="miter"/><polygon points="324.90,209.60 328.60,209.60 328.60,215.40 332.40,209.60 337.20,209.60 331.00,217.10 337.20,223.90 333.10,223.90 328.60,218.80 328.60,224.60 324.90,224.60" fill="#ffffff"/></svg>
<div style="position:absolute;left:249.0px;top:226.80px;font-size:8.5px;line-height:8.5px;color:#eef3fb;font-weight:normal;white-space:nowrap;font-family:'Liberation Sans', sans-serif;">Be Free. KDE</div>
<div style="position:absolute;left:64px;top:28.5px;width:280.4px;height:1.5px;background:rgba(255,255,255,0.35);"></div>
<div style="position:absolute;left:0px;top:220px;width:314.4px;height:1.5px;background:rgba(255,255,255,0.35);"></div>
<div style="position:absolute;left:64px;top:5.68px;font-size:24px;line-height:24px;color:#ffffff;font-weight:bold;white-space:nowrap;font-family:'Liberation Sans', sans-serif;-webkit-text-stroke:2px #ffffff;">Conclusion</div></div>
<div style="position:absolute;left:360.20000000000005px;width:600px;text-align:center;top:405.13px;font-size:6.7px;line-height:6.7px;color:#232629;font-weight:normal;white-space:nowrap;font-family:'Liberation Sans', sans-serif;">Slide 4</div>
<div style="position:absolute;left:614px;top:408px;width:104px;height:19px;background:#f3f4f5;"></div>
<div style="position:absolute;left:616.7px;top:408.6px;width:14.8px;height:15.3px;background:#fcfcfc;border:1px solid #cfd0d2;border-radius:3px;box-sizing:border-box;"></div>
<svg style="position:absolute;left:616.7px;top:408.6px;" width="14.8" height="15.3" viewBox="0 0 14.8 15.3"><path d="M7.4 4.3 V11 M4.1 7.65 H10.7" stroke="#4d4f52" stroke-width="0.85"/></svg>
<div style="position:absolute;left:633.9px;top:408.6px;width:15.1px;height:15.3px;background:#fcfcfc;border:1px solid #cfd0d2;border-radius:3px;box-sizing:border-box;"></div>
<svg style="position:absolute;left:633.9px;top:408.6px;" width="15.1" height="15.3" viewBox="0 0 15.1 15.3"><path d="M4.1 7.65 H11" stroke="#3b3d40" stroke-width="1.4"/></svg>
<div style="position:absolute;left:665.0px;top:408.6px;width:15.0px;height:15.3px;background:#fcfcfc;border:1px solid #cfd0d2;border-radius:3px;box-sizing:border-box;"></div>
<svg style="position:absolute;left:665.0px;top:408.6px;" width="15.0" height="15.3" viewBox="0 0 15.0 15.3"><path d="M4.3 9.2 L7.5 6 L10.7 9.2" fill="none" stroke="#3b3d40" stroke-width="1"/></svg>
<div style="position:absolute;left:682.0px;top:408.6px;width:15.5px;height:15.3px;background:#fcfcfc;border:1px solid #cfd0d2;border-radius:3px;box-sizing:border-box;"></div>
<svg style="position:absolute;left:682.0px;top:408.6px;" width="15.5" height="15.3" viewBox="0 0 15.5 15.3"><path d="M4.5 6.2 L7.75 9.4 L11 6.2" fill="none" stroke="#3b3d40" stroke-width="1"/></svg>
<div style="position:absolute;left:699.2px;top:408.6px;width:15.3px;height:15.3px;background:#fcfcfc;border:1px solid #cfd0d2;border-radius:3px;box-sizing:border-box;"></div>
<svg style="position:absolute;left:699.2px;top:408.6px;" width="15.3" height="15.3" viewBox="0 0 15.3 15.3"><rect x="4" y="4" width="7" height="7" fill="#55575a"/><rect x="4.8" y="5.9" width="5.4" height="4.3" fill="#8a8c8f"/><path d="M6.2 5.9 V10.2" stroke="#55575a" stroke-width="0.6"/></svg>
</body></html>
